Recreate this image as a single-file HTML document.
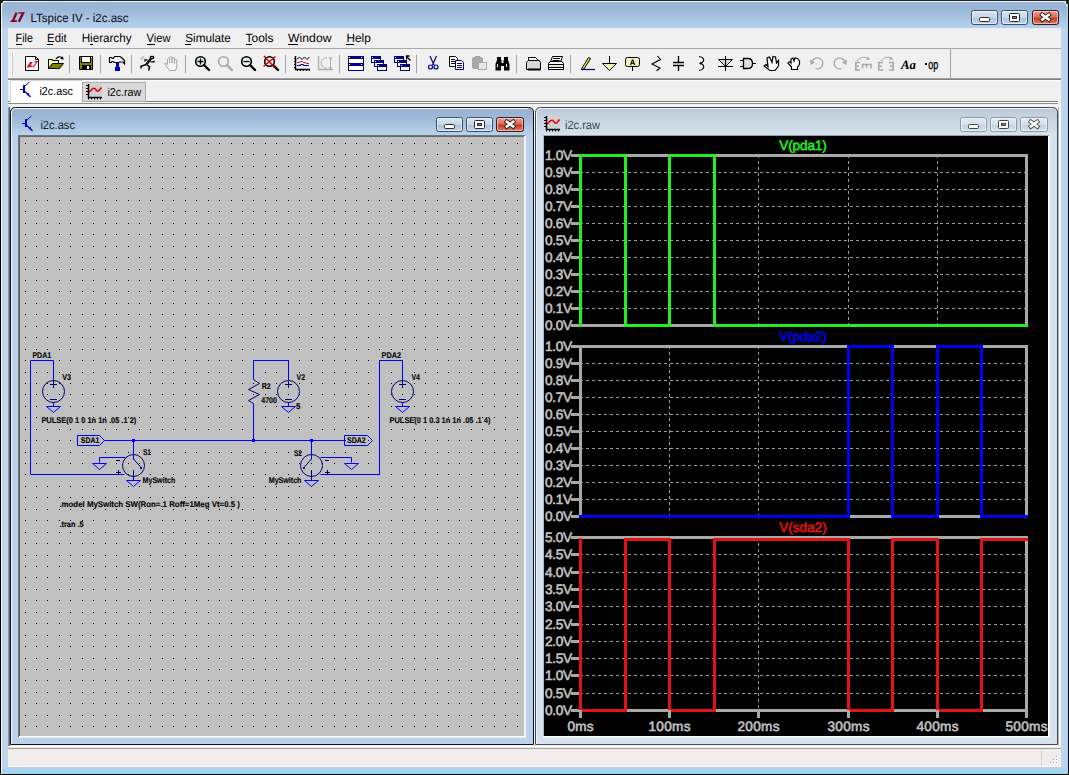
<!DOCTYPE html>
<html><head><meta charset="utf-8"><style>
html,body{margin:0;padding:0;width:1069px;height:775px;overflow:hidden;background:#000;}
svg{display:block;}
</style></head><body>
<svg width="1069" height="775" viewBox="0 0 1069 775" shape-rendering="auto" text-rendering="geometricPrecision">
<defs>
<linearGradient id="gTitle" x1="0" y1="0" x2="0" y2="1"><stop offset="0" stop-color="#99b2d1"/><stop offset="0.35" stop-color="#9bb7d8"/><stop offset="1" stop-color="#b6d2ea"/></linearGradient>
<linearGradient id="gChildA" x1="0" y1="0" x2="0" y2="1"><stop offset="0" stop-color="#97afcc"/><stop offset="0.3" stop-color="#9bb6d6"/><stop offset="1" stop-color="#b9d3ea"/></linearGradient>
<linearGradient id="gChildI" x1="0" y1="0" x2="0" y2="1"><stop offset="0" stop-color="#bccad8"/><stop offset="1" stop-color="#d6e2ee"/></linearGradient>
<linearGradient id="gBtn" x1="0" y1="0" x2="0" y2="1"><stop offset="0" stop-color="#dce8f4"/><stop offset="0.5" stop-color="#c4d6ea"/><stop offset="0.52" stop-color="#a9c0da"/><stop offset="1" stop-color="#c4d8ee"/></linearGradient>
<linearGradient id="gBtnI" x1="0" y1="0" x2="0" y2="1"><stop offset="0" stop-color="#e4ecf4"/><stop offset="0.5" stop-color="#d4dfea"/><stop offset="0.52" stop-color="#c2d0de"/><stop offset="1" stop-color="#d8e4f0"/></linearGradient>
<linearGradient id="gClose" x1="0" y1="0" x2="0" y2="1"><stop offset="0" stop-color="#eca294"/><stop offset="0.45" stop-color="#dc6e5e"/><stop offset="0.55" stop-color="#c83a22"/><stop offset="1" stop-color="#e2826e"/></linearGradient>
<linearGradient id="gBotFrame" x1="0" y1="0" x2="0" y2="1"><stop offset="0" stop-color="#bcd0ea"/><stop offset="1" stop-color="#90d8f8"/></linearGradient>
</defs>
<rect x="0" y="0" width="1069" height="775" fill="#c0d4ec" />
<rect x="0" y="0" width="1069" height="28" fill="url(#gTitle)" />
<rect x="0" y="0" width="1069" height="1" fill="#1c222a" />
<rect x="1" y="1" width="1067" height="1" fill="#eef3f8" />
<rect x="0" y="0" width="1" height="775" fill="#000" />
<rect x="1" y="1" width="1" height="773" fill="#f4f8fc" />
<rect x="1068" y="0" width="1" height="775" fill="#000" />
<rect x="1067" y="1" width="1" height="773" fill="#90d8f8" />
<rect x="0" y="774" width="1069" height="1" fill="#000" />
<rect x="2" y="767" width="1065" height="7" fill="url(#gBotFrame)" />
<rect x="0" y="0" width="3" height="3" fill="#1a0c08" />
<rect x="1066" y="0" width="3" height="4" fill="#0a2a0a" />
<path d="M1.5 6 Q1.5 1.5 6 1.5" stroke="#f4f8fc" fill="none"/>
<path d="M1062 1.5 Q1066.5 1.5 1066.5 6" stroke="#e8f4f0" fill="none"/>
<path d="M16.6 12.6 L12.8 21" stroke="#860018" stroke-width="2.3" fill="none"/>
<path d="M9.8 22 L11.5 20.3 L17.3 20.3 L16.6 22 Z" fill="#860018"/>
<path d="M18.3 12.2 H25 L24.4 13.6 H18 Z" fill="#860018"/>
<path d="M23.2 13 L18.8 21.8" stroke="#860018" stroke-width="2.3" fill="none"/>
<text x="30.5" y="21.6" font-family='"Liberation Sans", sans-serif' font-size="12" fill="#0a0a1a" font-weight="normal" font-style="normal" text-anchor="start" textLength="98" lengthAdjust="spacingAndGlyphs" >LTspice IV - i2c.asc</text>
<rect x="971.5" y="10.5" width="26" height="14" rx="2" fill="url(#gBtn)" stroke="#3c5070" stroke-width="1"/>
<rect x="972.5" y="11.5" width="24" height="12" rx="2" fill="none" stroke="rgba(255,255,255,0.5)" stroke-width="1"/>
<rect x="979.5" y="17.5" width="10" height="4" rx="1" fill="#fff" stroke="#2a2a2a" stroke-width="1"/>
<rect x="1001.5" y="10.5" width="26" height="14" rx="2" fill="url(#gBtn)" stroke="#3c5070" stroke-width="1"/>
<rect x="1002.5" y="11.5" width="24" height="12" rx="2" fill="none" stroke="rgba(255,255,255,0.5)" stroke-width="1"/>
<rect x="1009.5" y="13.5" width="10" height="8" rx="1" fill="#fff" stroke="#2a2a2a" stroke-width="1"/>
<rect x="1012.5" y="16.5" width="4" height="2" fill="#888" stroke="#2a2a2a" stroke-width="1"/>
<rect x="1032.5" y="10.5" width="26" height="14" rx="2" fill="url(#gClose)" stroke="#3a1a1a" stroke-width="1"/>
<rect x="1033.5" y="11.5" width="24" height="12" rx="2" fill="none" stroke="rgba(255,255,255,0.5)" stroke-width="1"/>
<path d="M1042.3 14.799999999999999 L1048.7 19.599999999999998 M1048.7 14.799999999999999 L1042.3 19.599999999999998" stroke="#2a2a2a" stroke-width="4.4" stroke-linecap="square"/>
<path d="M1042.3 14.799999999999999 L1048.7 19.599999999999998 M1048.7 14.799999999999999 L1042.3 19.599999999999998" stroke="#fff" stroke-width="2.5" stroke-linecap="square"/>
<rect x="8" y="28" width="1053" height="21" fill="#f0f0f0" />
<rect x="8" y="28" width="1053" height="1" fill="#e6eef8" />
<rect x="8" y="48" width="1053" height="1" fill="#a8a8a8" />
<rect x="8" y="49" width="1053" height="1" fill="#fcfcfc" />
<text x="15.6" y="42.3" font-family='"Liberation Sans", sans-serif' font-size="12" fill="#000" font-weight="normal" font-style="normal" text-anchor="start" textLength="17.3" lengthAdjust="spacingAndGlyphs" >File</text>
<rect x="16" y="44" width="6" height="1" fill="#000"/>
<text x="47.1" y="42.3" font-family='"Liberation Sans", sans-serif' font-size="12" fill="#000" font-weight="normal" font-style="normal" text-anchor="start" textLength="19.5" lengthAdjust="spacingAndGlyphs" >Edit</text>
<rect x="47" y="44" width="6" height="1" fill="#000"/>
<text x="81.7" y="42.3" font-family='"Liberation Sans", sans-serif' font-size="12" fill="#000" font-weight="normal" font-style="normal" text-anchor="start" textLength="49.8" lengthAdjust="spacingAndGlyphs" >Hierarchy</text>
<rect x="90" y="44" width="3" height="1" fill="#000"/>
<text x="146.6" y="42.3" font-family='"Liberation Sans", sans-serif' font-size="12" fill="#000" font-weight="normal" font-style="normal" text-anchor="start" textLength="24" lengthAdjust="spacingAndGlyphs" >View</text>
<rect x="147" y="44" width="8" height="1" fill="#000"/>
<text x="185.2" y="42.3" font-family='"Liberation Sans", sans-serif' font-size="12" fill="#000" font-weight="normal" font-style="normal" text-anchor="start" textLength="45.7" lengthAdjust="spacingAndGlyphs" >Simulate</text>
<rect x="185" y="44" width="6" height="1" fill="#000"/>
<text x="245.5" y="42.3" font-family='"Liberation Sans", sans-serif' font-size="12" fill="#000" font-weight="normal" font-style="normal" text-anchor="start" textLength="28" lengthAdjust="spacingAndGlyphs" >Tools</text>
<rect x="246" y="44" width="6" height="1" fill="#000"/>
<text x="288.1" y="42.3" font-family='"Liberation Sans", sans-serif' font-size="12" fill="#000" font-weight="normal" font-style="normal" text-anchor="start" textLength="43.4" lengthAdjust="spacingAndGlyphs" >Window</text>
<rect x="288" y="44" width="10" height="1" fill="#000"/>
<text x="346.5" y="42.3" font-family='"Liberation Sans", sans-serif' font-size="12" fill="#000" font-weight="normal" font-style="normal" text-anchor="start" textLength="24.3" lengthAdjust="spacingAndGlyphs" >Help</text>
<rect x="346" y="44" width="8" height="1" fill="#000"/>
<rect x="8" y="49" width="1053" height="30" fill="#f0f0f0" />
<rect x="8" y="78" width="1053" height="1" fill="#a4a4a4" />
<rect x="8" y="79" width="1053" height="1" fill="#7e7e7e" />
<rect x="8" y="80" width="1053" height="1" fill="#fafafa" />
<rect x="11" y="53" width="1" height="22" fill="#ffffff" />
<rect x="12" y="53" width="1" height="22" fill="#c8c8c8" />
<rect x="950" y="49" width="1" height="29" fill="#a0a0a0" />
<rect x="69" y="55" width="1" height="18" fill="#a0a0a0" />
<rect x="100" y="55" width="1" height="18" fill="#a0a0a0" />
<rect x="131" y="55" width="1" height="18" fill="#a0a0a0" />
<rect x="185" y="55" width="1" height="18" fill="#a0a0a0" />
<rect x="285" y="55" width="1" height="18" fill="#a0a0a0" />
<rect x="339" y="55" width="1" height="18" fill="#a0a0a0" />
<rect x="416" y="55" width="1" height="18" fill="#a0a0a0" />
<rect x="516" y="55" width="1" height="18" fill="#a0a0a0" />
<rect x="570" y="55" width="1" height="18" fill="#a0a0a0" />
<rect x="8" y="81" width="1053" height="26" fill="#f0f0f0" />
<rect x="8" y="101" width="1050" height="1" fill="#7c7c7c" />
<rect x="8" y="102" width="1050" height="1" fill="#ffffff" />
<rect x="8" y="103" width="1050" height="1" fill="#8c8c8c" />
<rect x="8" y="104" width="1050" height="3" fill="#fafafa" />
<rect x="10" y="80" width="72" height="23" fill="#ffffff" />
<rect x="10" y="80" width="1" height="23" fill="#d8d8d8" />
<rect x="10" y="80" width="72" height="1" fill="#d8d8d8" />
<rect x="82" y="82" width="64" height="20" fill="#dadada" />
<rect x="82.5" y="82.5" width="63" height="19" fill="none" stroke="#a8a8a8"/>
<text x="39.4" y="95" font-family='"Liberation Sans", sans-serif' font-size="11.5" fill="#000" font-weight="normal" font-style="normal" text-anchor="start" textLength="33.6" lengthAdjust="spacingAndGlyphs" >i2c.asc</text>
<text x="107.4" y="96.3" font-family='"Liberation Sans", sans-serif' font-size="11.5" fill="#000" font-weight="normal" font-style="normal" text-anchor="start" textLength="33.7" lengthAdjust="spacingAndGlyphs" >i2c.raw</text>
<rect x="8" y="104" width="1053" height="642" fill="#f2f2f2" />
<rect x="8" y="107" width="1" height="639" fill="#8a96a4" />
<rect x="9" y="107" width="1" height="639" fill="#5a626c" />
<rect x="1058" y="107" width="1" height="639" fill="#b0b0b0" />
<rect x="1059" y="107" width="1" height="639" fill="#f4fafa" />
<rect x="1060" y="104" width="1" height="642" fill="#f4fafa" />
<rect x="8" y="746" width="1053" height="21" fill="#efecea" />
<rect x="8" y="746" width="1053" height="1" fill="#ffffff" />
<rect x="8" y="748" width="1053" height="1" fill="#a0a0a0" />
<rect x="8" y="766" width="1053" height="1" fill="#ffffff" />
<rect x="1041" y="750" width="1" height="16" fill="#d0d0d0" />
<rect x="1056" y="756" width="2" height="2" fill="#ffffff" />
<rect x="1056" y="756" width="1" height="1" fill="#a0a0a8" />
<rect x="1053" y="759" width="2" height="2" fill="#ffffff" />
<rect x="1053" y="759" width="1" height="1" fill="#a0a0a8" />
<rect x="1056" y="759" width="2" height="2" fill="#ffffff" />
<rect x="1056" y="759" width="1" height="1" fill="#a0a0a8" />
<rect x="1050" y="762" width="2" height="2" fill="#ffffff" />
<rect x="1050" y="762" width="1" height="1" fill="#a0a0a8" />
<rect x="1053" y="762" width="2" height="2" fill="#ffffff" />
<rect x="1053" y="762" width="1" height="1" fill="#a0a0a8" />
<rect x="1056" y="762" width="2" height="2" fill="#ffffff" />
<rect x="1056" y="762" width="1" height="1" fill="#a0a0a8" />
<path d="M10.5 744.5 V112.5 Q10.5 107.5 15.5 107.5 H528.5 Q533.5 107.5 533.5 112.5 V744.5 Z" fill="#bcd2ec"/>
<clipPath id="cp10"><path d="M10.5 744.5 V112.5 Q10.5 107.5 15.5 107.5 H528.5 Q533.5 107.5 533.5 112.5 V744.5 Z"/></clipPath>
<rect x="10" y="107" width="524" height="29" fill="url(#gChildA)" clip-path="url(#cp10)"/>
<path d="M11.5 744 V113 Q11.5 108.5 16 108.5 H528 " fill="none" stroke="#f0f6fc" stroke-width="1"/>
<path d="M10.5 744.5 V112.5 Q10.5 107.5 15.5 107.5 H528.5 Q533.5 107.5 533.5 112.5 V744.5 Z" fill="none" stroke="#101418" stroke-width="1"/>
<path d="M535.5 744.5 V112.5 Q535.5 107.5 540.5 107.5 H1052.5 Q1057.5 107.5 1057.5 112.5 V744.5 Z" fill="#d6e2ee"/>
<clipPath id="cp535"><path d="M535.5 744.5 V112.5 Q535.5 107.5 540.5 107.5 H1052.5 Q1057.5 107.5 1057.5 112.5 V744.5 Z"/></clipPath>
<rect x="535" y="107" width="523" height="29" fill="url(#gChildI)" clip-path="url(#cp535)"/>
<path d="M536.5 744 V113 Q536.5 108.5 541 108.5 H1052 " fill="none" stroke="#f0f6fc" stroke-width="1"/>
<path d="M535.5 744.5 V112.5 Q535.5 107.5 540.5 107.5 H1052.5 Q1057.5 107.5 1057.5 112.5 V744.5 Z" fill="none" stroke="#484c52" stroke-width="1"/>
<rect x="19" y="135" width="506" height="602" fill="#c0c0c0" />
<rect x="18" y="135" width="507" height="1" fill="#6c747c" />
<rect x="18" y="135" width="1" height="602" fill="#707070" />
<rect x="19" y="136" width="1" height="601" fill="#646464" />
<rect x="19" y="136" width="506" height="1" fill="#646464" />
<rect x="524" y="136" width="1" height="601" fill="#fdfdfd" />
<rect x="19" y="736" width="507" height="1" fill="#fdfdfd" />
<rect x="525" y="136" width="1" height="602" fill="#e8eef6" />
<rect x="19" y="737" width="507" height="1" fill="#e8eef6" />
<rect x="543" y="135" width="506" height="601" fill="#000000" />
<rect x="543" y="135" width="506" height="1" fill="#9aa0a8" />
<rect x="543" y="135" width="1" height="601" fill="#b4bac2" />
<rect x="1048" y="136" width="1" height="601" fill="#fcfcfc" />
<rect x="1049" y="136" width="1" height="602" fill="#f0f4fa" />
<rect x="543" y="736" width="507" height="1" fill="#fcfcfc" />
<rect x="543" y="737" width="507" height="1" fill="#f0f4fa" />
<text x="40.4" y="129" font-family='"Liberation Sans", sans-serif' font-size="12" fill="#101828" font-weight="normal" font-style="normal" text-anchor="start" textLength="34.6" lengthAdjust="spacingAndGlyphs" >i2c.asc</text>
<text x="565" y="129" font-family='"Liberation Sans", sans-serif' font-size="12" fill="#3c4450" font-weight="normal" font-style="normal" text-anchor="start" textLength="35" lengthAdjust="spacingAndGlyphs" >i2c.raw</text>
<rect x="436.5" y="117.5" width="26" height="14" rx="2" fill="url(#gBtn)" stroke="#3c5070" stroke-width="1"/>
<rect x="437.5" y="118.5" width="24" height="12" rx="2" fill="none" stroke="rgba(255,255,255,0.5)" stroke-width="1"/>
<rect x="444.5" y="124.5" width="10" height="4" rx="1" fill="#fff" stroke="#2a2a2a" stroke-width="1"/>
<rect x="466.5" y="117.5" width="26" height="14" rx="2" fill="url(#gBtn)" stroke="#3c5070" stroke-width="1"/>
<rect x="467.5" y="118.5" width="24" height="12" rx="2" fill="none" stroke="rgba(255,255,255,0.5)" stroke-width="1"/>
<rect x="474.5" y="120.5" width="10" height="8" rx="1" fill="#fff" stroke="#2a2a2a" stroke-width="1"/>
<rect x="477.5" y="123.5" width="4" height="2" fill="#888" stroke="#2a2a2a" stroke-width="1"/>
<rect x="496.5" y="117.5" width="27" height="14" rx="2" fill="url(#gClose)" stroke="#3a1a1a" stroke-width="1"/>
<rect x="497.5" y="118.5" width="25" height="12" rx="2" fill="none" stroke="rgba(255,255,255,0.5)" stroke-width="1"/>
<path d="M506.8 121.8 L513.2 126.60000000000001 M513.2 121.8 L506.8 126.60000000000001" stroke="#2a2a2a" stroke-width="4.4" stroke-linecap="square"/>
<path d="M506.8 121.8 L513.2 126.60000000000001 M513.2 121.8 L506.8 126.60000000000001" stroke="#fff" stroke-width="2.5" stroke-linecap="square"/>
<rect x="960.5" y="117.5" width="26" height="14" rx="2" fill="url(#gBtnI)" stroke="#8a98aa" stroke-width="1"/>
<rect x="961.5" y="118.5" width="24" height="12" rx="2" fill="none" stroke="rgba(255,255,255,0.5)" stroke-width="1"/>
<rect x="968.5" y="124.5" width="10" height="4" rx="1" fill="#fff" stroke="#444" stroke-width="1"/>
<rect x="990.5" y="117.5" width="26" height="14" rx="2" fill="url(#gBtnI)" stroke="#8a98aa" stroke-width="1"/>
<rect x="991.5" y="118.5" width="24" height="12" rx="2" fill="none" stroke="rgba(255,255,255,0.5)" stroke-width="1"/>
<rect x="998.5" y="120.5" width="10" height="8" rx="1" fill="#fff" stroke="#444" stroke-width="1"/>
<rect x="1001.5" y="123.5" width="4" height="2" fill="#888" stroke="#444" stroke-width="1"/>
<rect x="1020.5" y="117.5" width="27" height="14" rx="2" fill="url(#gBtnI)" stroke="#8a98aa" stroke-width="1"/>
<rect x="1021.5" y="118.5" width="25" height="12" rx="2" fill="none" stroke="rgba(255,255,255,0.5)" stroke-width="1"/>
<path d="M1030.8 121.8 L1037.2 126.60000000000001 M1037.2 121.8 L1030.8 126.60000000000001" stroke="#555" stroke-width="4.4" stroke-linecap="square"/>
<path d="M1030.8 121.8 L1037.2 126.60000000000001 M1037.2 121.8 L1030.8 126.60000000000001" stroke="#fff" stroke-width="2.5" stroke-linecap="square"/>
<path d="M25 143h1v1h-1zM36 143h1v1h-1zM47 143h1v1h-1zM59 143h1v1h-1zM70 143h1v1h-1zM82 143h1v1h-1zM93 143h1v1h-1zM105 143h1v1h-1zM116 143h1v1h-1zM128 143h1v1h-1zM139 143h1v1h-1zM150 143h1v1h-1zM162 143h1v1h-1zM173 143h1v1h-1zM185 143h1v1h-1zM196 143h1v1h-1zM208 143h1v1h-1zM219 143h1v1h-1zM231 143h1v1h-1zM242 143h1v1h-1zM253 143h1v1h-1zM265 143h1v1h-1zM276 143h1v1h-1zM288 143h1v1h-1zM299 143h1v1h-1zM311 143h1v1h-1zM322 143h1v1h-1zM334 143h1v1h-1zM345 143h1v1h-1zM356 143h1v1h-1zM368 143h1v1h-1zM379 143h1v1h-1zM391 143h1v1h-1zM402 143h1v1h-1zM414 143h1v1h-1zM425 143h1v1h-1zM437 143h1v1h-1zM448 143h1v1h-1zM459 143h1v1h-1zM471 143h1v1h-1zM482 143h1v1h-1zM494 143h1v1h-1zM505 143h1v1h-1zM517 143h1v1h-1zM25 154h1v1h-1zM36 154h1v1h-1zM47 154h1v1h-1zM59 154h1v1h-1zM70 154h1v1h-1zM82 154h1v1h-1zM93 154h1v1h-1zM105 154h1v1h-1zM116 154h1v1h-1zM128 154h1v1h-1zM139 154h1v1h-1zM150 154h1v1h-1zM162 154h1v1h-1zM173 154h1v1h-1zM185 154h1v1h-1zM196 154h1v1h-1zM208 154h1v1h-1zM219 154h1v1h-1zM231 154h1v1h-1zM242 154h1v1h-1zM253 154h1v1h-1zM265 154h1v1h-1zM276 154h1v1h-1zM288 154h1v1h-1zM299 154h1v1h-1zM311 154h1v1h-1zM322 154h1v1h-1zM334 154h1v1h-1zM345 154h1v1h-1zM356 154h1v1h-1zM368 154h1v1h-1zM379 154h1v1h-1zM391 154h1v1h-1zM402 154h1v1h-1zM414 154h1v1h-1zM425 154h1v1h-1zM437 154h1v1h-1zM448 154h1v1h-1zM459 154h1v1h-1zM471 154h1v1h-1zM482 154h1v1h-1zM494 154h1v1h-1zM505 154h1v1h-1zM517 154h1v1h-1zM25 166h1v1h-1zM36 166h1v1h-1zM47 166h1v1h-1zM59 166h1v1h-1zM70 166h1v1h-1zM82 166h1v1h-1zM93 166h1v1h-1zM105 166h1v1h-1zM116 166h1v1h-1zM128 166h1v1h-1zM139 166h1v1h-1zM150 166h1v1h-1zM162 166h1v1h-1zM173 166h1v1h-1zM185 166h1v1h-1zM196 166h1v1h-1zM208 166h1v1h-1zM219 166h1v1h-1zM231 166h1v1h-1zM242 166h1v1h-1zM253 166h1v1h-1zM265 166h1v1h-1zM276 166h1v1h-1zM288 166h1v1h-1zM299 166h1v1h-1zM311 166h1v1h-1zM322 166h1v1h-1zM334 166h1v1h-1zM345 166h1v1h-1zM356 166h1v1h-1zM368 166h1v1h-1zM379 166h1v1h-1zM391 166h1v1h-1zM402 166h1v1h-1zM414 166h1v1h-1zM425 166h1v1h-1zM437 166h1v1h-1zM448 166h1v1h-1zM459 166h1v1h-1zM471 166h1v1h-1zM482 166h1v1h-1zM494 166h1v1h-1zM505 166h1v1h-1zM517 166h1v1h-1zM25 177h1v1h-1zM36 177h1v1h-1zM47 177h1v1h-1zM59 177h1v1h-1zM70 177h1v1h-1zM82 177h1v1h-1zM93 177h1v1h-1zM105 177h1v1h-1zM116 177h1v1h-1zM128 177h1v1h-1zM139 177h1v1h-1zM150 177h1v1h-1zM162 177h1v1h-1zM173 177h1v1h-1zM185 177h1v1h-1zM196 177h1v1h-1zM208 177h1v1h-1zM219 177h1v1h-1zM231 177h1v1h-1zM242 177h1v1h-1zM253 177h1v1h-1zM265 177h1v1h-1zM276 177h1v1h-1zM288 177h1v1h-1zM299 177h1v1h-1zM311 177h1v1h-1zM322 177h1v1h-1zM334 177h1v1h-1zM345 177h1v1h-1zM356 177h1v1h-1zM368 177h1v1h-1zM379 177h1v1h-1zM391 177h1v1h-1zM402 177h1v1h-1zM414 177h1v1h-1zM425 177h1v1h-1zM437 177h1v1h-1zM448 177h1v1h-1zM459 177h1v1h-1zM471 177h1v1h-1zM482 177h1v1h-1zM494 177h1v1h-1zM505 177h1v1h-1zM517 177h1v1h-1zM25 188h1v1h-1zM36 188h1v1h-1zM47 188h1v1h-1zM59 188h1v1h-1zM70 188h1v1h-1zM82 188h1v1h-1zM93 188h1v1h-1zM105 188h1v1h-1zM116 188h1v1h-1zM128 188h1v1h-1zM139 188h1v1h-1zM150 188h1v1h-1zM162 188h1v1h-1zM173 188h1v1h-1zM185 188h1v1h-1zM196 188h1v1h-1zM208 188h1v1h-1zM219 188h1v1h-1zM231 188h1v1h-1zM242 188h1v1h-1zM253 188h1v1h-1zM265 188h1v1h-1zM276 188h1v1h-1zM288 188h1v1h-1zM299 188h1v1h-1zM311 188h1v1h-1zM322 188h1v1h-1zM334 188h1v1h-1zM345 188h1v1h-1zM356 188h1v1h-1zM368 188h1v1h-1zM379 188h1v1h-1zM391 188h1v1h-1zM402 188h1v1h-1zM414 188h1v1h-1zM425 188h1v1h-1zM437 188h1v1h-1zM448 188h1v1h-1zM459 188h1v1h-1zM471 188h1v1h-1zM482 188h1v1h-1zM494 188h1v1h-1zM505 188h1v1h-1zM517 188h1v1h-1zM25 200h1v1h-1zM36 200h1v1h-1zM47 200h1v1h-1zM59 200h1v1h-1zM70 200h1v1h-1zM82 200h1v1h-1zM93 200h1v1h-1zM105 200h1v1h-1zM116 200h1v1h-1zM128 200h1v1h-1zM139 200h1v1h-1zM150 200h1v1h-1zM162 200h1v1h-1zM173 200h1v1h-1zM185 200h1v1h-1zM196 200h1v1h-1zM208 200h1v1h-1zM219 200h1v1h-1zM231 200h1v1h-1zM242 200h1v1h-1zM253 200h1v1h-1zM265 200h1v1h-1zM276 200h1v1h-1zM288 200h1v1h-1zM299 200h1v1h-1zM311 200h1v1h-1zM322 200h1v1h-1zM334 200h1v1h-1zM345 200h1v1h-1zM356 200h1v1h-1zM368 200h1v1h-1zM379 200h1v1h-1zM391 200h1v1h-1zM402 200h1v1h-1zM414 200h1v1h-1zM425 200h1v1h-1zM437 200h1v1h-1zM448 200h1v1h-1zM459 200h1v1h-1zM471 200h1v1h-1zM482 200h1v1h-1zM494 200h1v1h-1zM505 200h1v1h-1zM517 200h1v1h-1zM25 211h1v1h-1zM36 211h1v1h-1zM47 211h1v1h-1zM59 211h1v1h-1zM70 211h1v1h-1zM82 211h1v1h-1zM93 211h1v1h-1zM105 211h1v1h-1zM116 211h1v1h-1zM128 211h1v1h-1zM139 211h1v1h-1zM150 211h1v1h-1zM162 211h1v1h-1zM173 211h1v1h-1zM185 211h1v1h-1zM196 211h1v1h-1zM208 211h1v1h-1zM219 211h1v1h-1zM231 211h1v1h-1zM242 211h1v1h-1zM253 211h1v1h-1zM265 211h1v1h-1zM276 211h1v1h-1zM288 211h1v1h-1zM299 211h1v1h-1zM311 211h1v1h-1zM322 211h1v1h-1zM334 211h1v1h-1zM345 211h1v1h-1zM356 211h1v1h-1zM368 211h1v1h-1zM379 211h1v1h-1zM391 211h1v1h-1zM402 211h1v1h-1zM414 211h1v1h-1zM425 211h1v1h-1zM437 211h1v1h-1zM448 211h1v1h-1zM459 211h1v1h-1zM471 211h1v1h-1zM482 211h1v1h-1zM494 211h1v1h-1zM505 211h1v1h-1zM517 211h1v1h-1zM25 223h1v1h-1zM36 223h1v1h-1zM47 223h1v1h-1zM59 223h1v1h-1zM70 223h1v1h-1zM82 223h1v1h-1zM93 223h1v1h-1zM105 223h1v1h-1zM116 223h1v1h-1zM128 223h1v1h-1zM139 223h1v1h-1zM150 223h1v1h-1zM162 223h1v1h-1zM173 223h1v1h-1zM185 223h1v1h-1zM196 223h1v1h-1zM208 223h1v1h-1zM219 223h1v1h-1zM231 223h1v1h-1zM242 223h1v1h-1zM253 223h1v1h-1zM265 223h1v1h-1zM276 223h1v1h-1zM288 223h1v1h-1zM299 223h1v1h-1zM311 223h1v1h-1zM322 223h1v1h-1zM334 223h1v1h-1zM345 223h1v1h-1zM356 223h1v1h-1zM368 223h1v1h-1zM379 223h1v1h-1zM391 223h1v1h-1zM402 223h1v1h-1zM414 223h1v1h-1zM425 223h1v1h-1zM437 223h1v1h-1zM448 223h1v1h-1zM459 223h1v1h-1zM471 223h1v1h-1zM482 223h1v1h-1zM494 223h1v1h-1zM505 223h1v1h-1zM517 223h1v1h-1zM25 234h1v1h-1zM36 234h1v1h-1zM47 234h1v1h-1zM59 234h1v1h-1zM70 234h1v1h-1zM82 234h1v1h-1zM93 234h1v1h-1zM105 234h1v1h-1zM116 234h1v1h-1zM128 234h1v1h-1zM139 234h1v1h-1zM150 234h1v1h-1zM162 234h1v1h-1zM173 234h1v1h-1zM185 234h1v1h-1zM196 234h1v1h-1zM208 234h1v1h-1zM219 234h1v1h-1zM231 234h1v1h-1zM242 234h1v1h-1zM253 234h1v1h-1zM265 234h1v1h-1zM276 234h1v1h-1zM288 234h1v1h-1zM299 234h1v1h-1zM311 234h1v1h-1zM322 234h1v1h-1zM334 234h1v1h-1zM345 234h1v1h-1zM356 234h1v1h-1zM368 234h1v1h-1zM379 234h1v1h-1zM391 234h1v1h-1zM402 234h1v1h-1zM414 234h1v1h-1zM425 234h1v1h-1zM437 234h1v1h-1zM448 234h1v1h-1zM459 234h1v1h-1zM471 234h1v1h-1zM482 234h1v1h-1zM494 234h1v1h-1zM505 234h1v1h-1zM517 234h1v1h-1zM25 246h1v1h-1zM36 246h1v1h-1zM47 246h1v1h-1zM59 246h1v1h-1zM70 246h1v1h-1zM82 246h1v1h-1zM93 246h1v1h-1zM105 246h1v1h-1zM116 246h1v1h-1zM128 246h1v1h-1zM139 246h1v1h-1zM150 246h1v1h-1zM162 246h1v1h-1zM173 246h1v1h-1zM185 246h1v1h-1zM196 246h1v1h-1zM208 246h1v1h-1zM219 246h1v1h-1zM231 246h1v1h-1zM242 246h1v1h-1zM253 246h1v1h-1zM265 246h1v1h-1zM276 246h1v1h-1zM288 246h1v1h-1zM299 246h1v1h-1zM311 246h1v1h-1zM322 246h1v1h-1zM334 246h1v1h-1zM345 246h1v1h-1zM356 246h1v1h-1zM368 246h1v1h-1zM379 246h1v1h-1zM391 246h1v1h-1zM402 246h1v1h-1zM414 246h1v1h-1zM425 246h1v1h-1zM437 246h1v1h-1zM448 246h1v1h-1zM459 246h1v1h-1zM471 246h1v1h-1zM482 246h1v1h-1zM494 246h1v1h-1zM505 246h1v1h-1zM517 246h1v1h-1zM25 257h1v1h-1zM36 257h1v1h-1zM47 257h1v1h-1zM59 257h1v1h-1zM70 257h1v1h-1zM82 257h1v1h-1zM93 257h1v1h-1zM105 257h1v1h-1zM116 257h1v1h-1zM128 257h1v1h-1zM139 257h1v1h-1zM150 257h1v1h-1zM162 257h1v1h-1zM173 257h1v1h-1zM185 257h1v1h-1zM196 257h1v1h-1zM208 257h1v1h-1zM219 257h1v1h-1zM231 257h1v1h-1zM242 257h1v1h-1zM253 257h1v1h-1zM265 257h1v1h-1zM276 257h1v1h-1zM288 257h1v1h-1zM299 257h1v1h-1zM311 257h1v1h-1zM322 257h1v1h-1zM334 257h1v1h-1zM345 257h1v1h-1zM356 257h1v1h-1zM368 257h1v1h-1zM379 257h1v1h-1zM391 257h1v1h-1zM402 257h1v1h-1zM414 257h1v1h-1zM425 257h1v1h-1zM437 257h1v1h-1zM448 257h1v1h-1zM459 257h1v1h-1zM471 257h1v1h-1zM482 257h1v1h-1zM494 257h1v1h-1zM505 257h1v1h-1zM517 257h1v1h-1zM25 269h1v1h-1zM36 269h1v1h-1zM47 269h1v1h-1zM59 269h1v1h-1zM70 269h1v1h-1zM82 269h1v1h-1zM93 269h1v1h-1zM105 269h1v1h-1zM116 269h1v1h-1zM128 269h1v1h-1zM139 269h1v1h-1zM150 269h1v1h-1zM162 269h1v1h-1zM173 269h1v1h-1zM185 269h1v1h-1zM196 269h1v1h-1zM208 269h1v1h-1zM219 269h1v1h-1zM231 269h1v1h-1zM242 269h1v1h-1zM253 269h1v1h-1zM265 269h1v1h-1zM276 269h1v1h-1zM288 269h1v1h-1zM299 269h1v1h-1zM311 269h1v1h-1zM322 269h1v1h-1zM334 269h1v1h-1zM345 269h1v1h-1zM356 269h1v1h-1zM368 269h1v1h-1zM379 269h1v1h-1zM391 269h1v1h-1zM402 269h1v1h-1zM414 269h1v1h-1zM425 269h1v1h-1zM437 269h1v1h-1zM448 269h1v1h-1zM459 269h1v1h-1zM471 269h1v1h-1zM482 269h1v1h-1zM494 269h1v1h-1zM505 269h1v1h-1zM517 269h1v1h-1zM25 280h1v1h-1zM36 280h1v1h-1zM47 280h1v1h-1zM59 280h1v1h-1zM70 280h1v1h-1zM82 280h1v1h-1zM93 280h1v1h-1zM105 280h1v1h-1zM116 280h1v1h-1zM128 280h1v1h-1zM139 280h1v1h-1zM150 280h1v1h-1zM162 280h1v1h-1zM173 280h1v1h-1zM185 280h1v1h-1zM196 280h1v1h-1zM208 280h1v1h-1zM219 280h1v1h-1zM231 280h1v1h-1zM242 280h1v1h-1zM253 280h1v1h-1zM265 280h1v1h-1zM276 280h1v1h-1zM288 280h1v1h-1zM299 280h1v1h-1zM311 280h1v1h-1zM322 280h1v1h-1zM334 280h1v1h-1zM345 280h1v1h-1zM356 280h1v1h-1zM368 280h1v1h-1zM379 280h1v1h-1zM391 280h1v1h-1zM402 280h1v1h-1zM414 280h1v1h-1zM425 280h1v1h-1zM437 280h1v1h-1zM448 280h1v1h-1zM459 280h1v1h-1zM471 280h1v1h-1zM482 280h1v1h-1zM494 280h1v1h-1zM505 280h1v1h-1zM517 280h1v1h-1zM25 291h1v1h-1zM36 291h1v1h-1zM47 291h1v1h-1zM59 291h1v1h-1zM70 291h1v1h-1zM82 291h1v1h-1zM93 291h1v1h-1zM105 291h1v1h-1zM116 291h1v1h-1zM128 291h1v1h-1zM139 291h1v1h-1zM150 291h1v1h-1zM162 291h1v1h-1zM173 291h1v1h-1zM185 291h1v1h-1zM196 291h1v1h-1zM208 291h1v1h-1zM219 291h1v1h-1zM231 291h1v1h-1zM242 291h1v1h-1zM253 291h1v1h-1zM265 291h1v1h-1zM276 291h1v1h-1zM288 291h1v1h-1zM299 291h1v1h-1zM311 291h1v1h-1zM322 291h1v1h-1zM334 291h1v1h-1zM345 291h1v1h-1zM356 291h1v1h-1zM368 291h1v1h-1zM379 291h1v1h-1zM391 291h1v1h-1zM402 291h1v1h-1zM414 291h1v1h-1zM425 291h1v1h-1zM437 291h1v1h-1zM448 291h1v1h-1zM459 291h1v1h-1zM471 291h1v1h-1zM482 291h1v1h-1zM494 291h1v1h-1zM505 291h1v1h-1zM517 291h1v1h-1zM25 303h1v1h-1zM36 303h1v1h-1zM47 303h1v1h-1zM59 303h1v1h-1zM70 303h1v1h-1zM82 303h1v1h-1zM93 303h1v1h-1zM105 303h1v1h-1zM116 303h1v1h-1zM128 303h1v1h-1zM139 303h1v1h-1zM150 303h1v1h-1zM162 303h1v1h-1zM173 303h1v1h-1zM185 303h1v1h-1zM196 303h1v1h-1zM208 303h1v1h-1zM219 303h1v1h-1zM231 303h1v1h-1zM242 303h1v1h-1zM253 303h1v1h-1zM265 303h1v1h-1zM276 303h1v1h-1zM288 303h1v1h-1zM299 303h1v1h-1zM311 303h1v1h-1zM322 303h1v1h-1zM334 303h1v1h-1zM345 303h1v1h-1zM356 303h1v1h-1zM368 303h1v1h-1zM379 303h1v1h-1zM391 303h1v1h-1zM402 303h1v1h-1zM414 303h1v1h-1zM425 303h1v1h-1zM437 303h1v1h-1zM448 303h1v1h-1zM459 303h1v1h-1zM471 303h1v1h-1zM482 303h1v1h-1zM494 303h1v1h-1zM505 303h1v1h-1zM517 303h1v1h-1zM25 314h1v1h-1zM36 314h1v1h-1zM47 314h1v1h-1zM59 314h1v1h-1zM70 314h1v1h-1zM82 314h1v1h-1zM93 314h1v1h-1zM105 314h1v1h-1zM116 314h1v1h-1zM128 314h1v1h-1zM139 314h1v1h-1zM150 314h1v1h-1zM162 314h1v1h-1zM173 314h1v1h-1zM185 314h1v1h-1zM196 314h1v1h-1zM208 314h1v1h-1zM219 314h1v1h-1zM231 314h1v1h-1zM242 314h1v1h-1zM253 314h1v1h-1zM265 314h1v1h-1zM276 314h1v1h-1zM288 314h1v1h-1zM299 314h1v1h-1zM311 314h1v1h-1zM322 314h1v1h-1zM334 314h1v1h-1zM345 314h1v1h-1zM356 314h1v1h-1zM368 314h1v1h-1zM379 314h1v1h-1zM391 314h1v1h-1zM402 314h1v1h-1zM414 314h1v1h-1zM425 314h1v1h-1zM437 314h1v1h-1zM448 314h1v1h-1zM459 314h1v1h-1zM471 314h1v1h-1zM482 314h1v1h-1zM494 314h1v1h-1zM505 314h1v1h-1zM517 314h1v1h-1zM25 326h1v1h-1zM36 326h1v1h-1zM47 326h1v1h-1zM59 326h1v1h-1zM70 326h1v1h-1zM82 326h1v1h-1zM93 326h1v1h-1zM105 326h1v1h-1zM116 326h1v1h-1zM128 326h1v1h-1zM139 326h1v1h-1zM150 326h1v1h-1zM162 326h1v1h-1zM173 326h1v1h-1zM185 326h1v1h-1zM196 326h1v1h-1zM208 326h1v1h-1zM219 326h1v1h-1zM231 326h1v1h-1zM242 326h1v1h-1zM253 326h1v1h-1zM265 326h1v1h-1zM276 326h1v1h-1zM288 326h1v1h-1zM299 326h1v1h-1zM311 326h1v1h-1zM322 326h1v1h-1zM334 326h1v1h-1zM345 326h1v1h-1zM356 326h1v1h-1zM368 326h1v1h-1zM379 326h1v1h-1zM391 326h1v1h-1zM402 326h1v1h-1zM414 326h1v1h-1zM425 326h1v1h-1zM437 326h1v1h-1zM448 326h1v1h-1zM459 326h1v1h-1zM471 326h1v1h-1zM482 326h1v1h-1zM494 326h1v1h-1zM505 326h1v1h-1zM517 326h1v1h-1zM25 337h1v1h-1zM36 337h1v1h-1zM47 337h1v1h-1zM59 337h1v1h-1zM70 337h1v1h-1zM82 337h1v1h-1zM93 337h1v1h-1zM105 337h1v1h-1zM116 337h1v1h-1zM128 337h1v1h-1zM139 337h1v1h-1zM150 337h1v1h-1zM162 337h1v1h-1zM173 337h1v1h-1zM185 337h1v1h-1zM196 337h1v1h-1zM208 337h1v1h-1zM219 337h1v1h-1zM231 337h1v1h-1zM242 337h1v1h-1zM253 337h1v1h-1zM265 337h1v1h-1zM276 337h1v1h-1zM288 337h1v1h-1zM299 337h1v1h-1zM311 337h1v1h-1zM322 337h1v1h-1zM334 337h1v1h-1zM345 337h1v1h-1zM356 337h1v1h-1zM368 337h1v1h-1zM379 337h1v1h-1zM391 337h1v1h-1zM402 337h1v1h-1zM414 337h1v1h-1zM425 337h1v1h-1zM437 337h1v1h-1zM448 337h1v1h-1zM459 337h1v1h-1zM471 337h1v1h-1zM482 337h1v1h-1zM494 337h1v1h-1zM505 337h1v1h-1zM517 337h1v1h-1zM25 349h1v1h-1zM36 349h1v1h-1zM47 349h1v1h-1zM59 349h1v1h-1zM70 349h1v1h-1zM82 349h1v1h-1zM93 349h1v1h-1zM105 349h1v1h-1zM116 349h1v1h-1zM128 349h1v1h-1zM139 349h1v1h-1zM150 349h1v1h-1zM162 349h1v1h-1zM173 349h1v1h-1zM185 349h1v1h-1zM196 349h1v1h-1zM208 349h1v1h-1zM219 349h1v1h-1zM231 349h1v1h-1zM242 349h1v1h-1zM253 349h1v1h-1zM265 349h1v1h-1zM276 349h1v1h-1zM288 349h1v1h-1zM299 349h1v1h-1zM311 349h1v1h-1zM322 349h1v1h-1zM334 349h1v1h-1zM345 349h1v1h-1zM356 349h1v1h-1zM368 349h1v1h-1zM379 349h1v1h-1zM391 349h1v1h-1zM402 349h1v1h-1zM414 349h1v1h-1zM425 349h1v1h-1zM437 349h1v1h-1zM448 349h1v1h-1zM459 349h1v1h-1zM471 349h1v1h-1zM482 349h1v1h-1zM494 349h1v1h-1zM505 349h1v1h-1zM517 349h1v1h-1zM25 360h1v1h-1zM36 360h1v1h-1zM47 360h1v1h-1zM59 360h1v1h-1zM70 360h1v1h-1zM82 360h1v1h-1zM93 360h1v1h-1zM105 360h1v1h-1zM116 360h1v1h-1zM128 360h1v1h-1zM139 360h1v1h-1zM150 360h1v1h-1zM162 360h1v1h-1zM173 360h1v1h-1zM185 360h1v1h-1zM196 360h1v1h-1zM208 360h1v1h-1zM219 360h1v1h-1zM231 360h1v1h-1zM242 360h1v1h-1zM253 360h1v1h-1zM265 360h1v1h-1zM276 360h1v1h-1zM288 360h1v1h-1zM299 360h1v1h-1zM311 360h1v1h-1zM322 360h1v1h-1zM334 360h1v1h-1zM345 360h1v1h-1zM356 360h1v1h-1zM368 360h1v1h-1zM379 360h1v1h-1zM391 360h1v1h-1zM402 360h1v1h-1zM414 360h1v1h-1zM425 360h1v1h-1zM437 360h1v1h-1zM448 360h1v1h-1zM459 360h1v1h-1zM471 360h1v1h-1zM482 360h1v1h-1zM494 360h1v1h-1zM505 360h1v1h-1zM517 360h1v1h-1zM25 372h1v1h-1zM36 372h1v1h-1zM47 372h1v1h-1zM59 372h1v1h-1zM70 372h1v1h-1zM82 372h1v1h-1zM93 372h1v1h-1zM105 372h1v1h-1zM116 372h1v1h-1zM128 372h1v1h-1zM139 372h1v1h-1zM150 372h1v1h-1zM162 372h1v1h-1zM173 372h1v1h-1zM185 372h1v1h-1zM196 372h1v1h-1zM208 372h1v1h-1zM219 372h1v1h-1zM231 372h1v1h-1zM242 372h1v1h-1zM253 372h1v1h-1zM265 372h1v1h-1zM276 372h1v1h-1zM288 372h1v1h-1zM299 372h1v1h-1zM311 372h1v1h-1zM322 372h1v1h-1zM334 372h1v1h-1zM345 372h1v1h-1zM356 372h1v1h-1zM368 372h1v1h-1zM379 372h1v1h-1zM391 372h1v1h-1zM402 372h1v1h-1zM414 372h1v1h-1zM425 372h1v1h-1zM437 372h1v1h-1zM448 372h1v1h-1zM459 372h1v1h-1zM471 372h1v1h-1zM482 372h1v1h-1zM494 372h1v1h-1zM505 372h1v1h-1zM517 372h1v1h-1zM25 383h1v1h-1zM36 383h1v1h-1zM47 383h1v1h-1zM59 383h1v1h-1zM70 383h1v1h-1zM82 383h1v1h-1zM93 383h1v1h-1zM105 383h1v1h-1zM116 383h1v1h-1zM128 383h1v1h-1zM139 383h1v1h-1zM150 383h1v1h-1zM162 383h1v1h-1zM173 383h1v1h-1zM185 383h1v1h-1zM196 383h1v1h-1zM208 383h1v1h-1zM219 383h1v1h-1zM231 383h1v1h-1zM242 383h1v1h-1zM253 383h1v1h-1zM265 383h1v1h-1zM276 383h1v1h-1zM288 383h1v1h-1zM299 383h1v1h-1zM311 383h1v1h-1zM322 383h1v1h-1zM334 383h1v1h-1zM345 383h1v1h-1zM356 383h1v1h-1zM368 383h1v1h-1zM379 383h1v1h-1zM391 383h1v1h-1zM402 383h1v1h-1zM414 383h1v1h-1zM425 383h1v1h-1zM437 383h1v1h-1zM448 383h1v1h-1zM459 383h1v1h-1zM471 383h1v1h-1zM482 383h1v1h-1zM494 383h1v1h-1zM505 383h1v1h-1zM517 383h1v1h-1zM25 394h1v1h-1zM36 394h1v1h-1zM47 394h1v1h-1zM59 394h1v1h-1zM70 394h1v1h-1zM82 394h1v1h-1zM93 394h1v1h-1zM105 394h1v1h-1zM116 394h1v1h-1zM128 394h1v1h-1zM139 394h1v1h-1zM150 394h1v1h-1zM162 394h1v1h-1zM173 394h1v1h-1zM185 394h1v1h-1zM196 394h1v1h-1zM208 394h1v1h-1zM219 394h1v1h-1zM231 394h1v1h-1zM242 394h1v1h-1zM253 394h1v1h-1zM265 394h1v1h-1zM276 394h1v1h-1zM288 394h1v1h-1zM299 394h1v1h-1zM311 394h1v1h-1zM322 394h1v1h-1zM334 394h1v1h-1zM345 394h1v1h-1zM356 394h1v1h-1zM368 394h1v1h-1zM379 394h1v1h-1zM391 394h1v1h-1zM402 394h1v1h-1zM414 394h1v1h-1zM425 394h1v1h-1zM437 394h1v1h-1zM448 394h1v1h-1zM459 394h1v1h-1zM471 394h1v1h-1zM482 394h1v1h-1zM494 394h1v1h-1zM505 394h1v1h-1zM517 394h1v1h-1zM25 406h1v1h-1zM36 406h1v1h-1zM47 406h1v1h-1zM59 406h1v1h-1zM70 406h1v1h-1zM82 406h1v1h-1zM93 406h1v1h-1zM105 406h1v1h-1zM116 406h1v1h-1zM128 406h1v1h-1zM139 406h1v1h-1zM150 406h1v1h-1zM162 406h1v1h-1zM173 406h1v1h-1zM185 406h1v1h-1zM196 406h1v1h-1zM208 406h1v1h-1zM219 406h1v1h-1zM231 406h1v1h-1zM242 406h1v1h-1zM253 406h1v1h-1zM265 406h1v1h-1zM276 406h1v1h-1zM288 406h1v1h-1zM299 406h1v1h-1zM311 406h1v1h-1zM322 406h1v1h-1zM334 406h1v1h-1zM345 406h1v1h-1zM356 406h1v1h-1zM368 406h1v1h-1zM379 406h1v1h-1zM391 406h1v1h-1zM402 406h1v1h-1zM414 406h1v1h-1zM425 406h1v1h-1zM437 406h1v1h-1zM448 406h1v1h-1zM459 406h1v1h-1zM471 406h1v1h-1zM482 406h1v1h-1zM494 406h1v1h-1zM505 406h1v1h-1zM517 406h1v1h-1zM25 417h1v1h-1zM36 417h1v1h-1zM47 417h1v1h-1zM59 417h1v1h-1zM70 417h1v1h-1zM82 417h1v1h-1zM93 417h1v1h-1zM105 417h1v1h-1zM116 417h1v1h-1zM128 417h1v1h-1zM139 417h1v1h-1zM150 417h1v1h-1zM162 417h1v1h-1zM173 417h1v1h-1zM185 417h1v1h-1zM196 417h1v1h-1zM208 417h1v1h-1zM219 417h1v1h-1zM231 417h1v1h-1zM242 417h1v1h-1zM253 417h1v1h-1zM265 417h1v1h-1zM276 417h1v1h-1zM288 417h1v1h-1zM299 417h1v1h-1zM311 417h1v1h-1zM322 417h1v1h-1zM334 417h1v1h-1zM345 417h1v1h-1zM356 417h1v1h-1zM368 417h1v1h-1zM379 417h1v1h-1zM391 417h1v1h-1zM402 417h1v1h-1zM414 417h1v1h-1zM425 417h1v1h-1zM437 417h1v1h-1zM448 417h1v1h-1zM459 417h1v1h-1zM471 417h1v1h-1zM482 417h1v1h-1zM494 417h1v1h-1zM505 417h1v1h-1zM517 417h1v1h-1zM25 429h1v1h-1zM36 429h1v1h-1zM47 429h1v1h-1zM59 429h1v1h-1zM70 429h1v1h-1zM82 429h1v1h-1zM93 429h1v1h-1zM105 429h1v1h-1zM116 429h1v1h-1zM128 429h1v1h-1zM139 429h1v1h-1zM150 429h1v1h-1zM162 429h1v1h-1zM173 429h1v1h-1zM185 429h1v1h-1zM196 429h1v1h-1zM208 429h1v1h-1zM219 429h1v1h-1zM231 429h1v1h-1zM242 429h1v1h-1zM253 429h1v1h-1zM265 429h1v1h-1zM276 429h1v1h-1zM288 429h1v1h-1zM299 429h1v1h-1zM311 429h1v1h-1zM322 429h1v1h-1zM334 429h1v1h-1zM345 429h1v1h-1zM356 429h1v1h-1zM368 429h1v1h-1zM379 429h1v1h-1zM391 429h1v1h-1zM402 429h1v1h-1zM414 429h1v1h-1zM425 429h1v1h-1zM437 429h1v1h-1zM448 429h1v1h-1zM459 429h1v1h-1zM471 429h1v1h-1zM482 429h1v1h-1zM494 429h1v1h-1zM505 429h1v1h-1zM517 429h1v1h-1zM25 440h1v1h-1zM36 440h1v1h-1zM47 440h1v1h-1zM59 440h1v1h-1zM70 440h1v1h-1zM82 440h1v1h-1zM93 440h1v1h-1zM105 440h1v1h-1zM116 440h1v1h-1zM128 440h1v1h-1zM139 440h1v1h-1zM150 440h1v1h-1zM162 440h1v1h-1zM173 440h1v1h-1zM185 440h1v1h-1zM196 440h1v1h-1zM208 440h1v1h-1zM219 440h1v1h-1zM231 440h1v1h-1zM242 440h1v1h-1zM253 440h1v1h-1zM265 440h1v1h-1zM276 440h1v1h-1zM288 440h1v1h-1zM299 440h1v1h-1zM311 440h1v1h-1zM322 440h1v1h-1zM334 440h1v1h-1zM345 440h1v1h-1zM356 440h1v1h-1zM368 440h1v1h-1zM379 440h1v1h-1zM391 440h1v1h-1zM402 440h1v1h-1zM414 440h1v1h-1zM425 440h1v1h-1zM437 440h1v1h-1zM448 440h1v1h-1zM459 440h1v1h-1zM471 440h1v1h-1zM482 440h1v1h-1zM494 440h1v1h-1zM505 440h1v1h-1zM517 440h1v1h-1zM25 452h1v1h-1zM36 452h1v1h-1zM47 452h1v1h-1zM59 452h1v1h-1zM70 452h1v1h-1zM82 452h1v1h-1zM93 452h1v1h-1zM105 452h1v1h-1zM116 452h1v1h-1zM128 452h1v1h-1zM139 452h1v1h-1zM150 452h1v1h-1zM162 452h1v1h-1zM173 452h1v1h-1zM185 452h1v1h-1zM196 452h1v1h-1zM208 452h1v1h-1zM219 452h1v1h-1zM231 452h1v1h-1zM242 452h1v1h-1zM253 452h1v1h-1zM265 452h1v1h-1zM276 452h1v1h-1zM288 452h1v1h-1zM299 452h1v1h-1zM311 452h1v1h-1zM322 452h1v1h-1zM334 452h1v1h-1zM345 452h1v1h-1zM356 452h1v1h-1zM368 452h1v1h-1zM379 452h1v1h-1zM391 452h1v1h-1zM402 452h1v1h-1zM414 452h1v1h-1zM425 452h1v1h-1zM437 452h1v1h-1zM448 452h1v1h-1zM459 452h1v1h-1zM471 452h1v1h-1zM482 452h1v1h-1zM494 452h1v1h-1zM505 452h1v1h-1zM517 452h1v1h-1zM25 463h1v1h-1zM36 463h1v1h-1zM47 463h1v1h-1zM59 463h1v1h-1zM70 463h1v1h-1zM82 463h1v1h-1zM93 463h1v1h-1zM105 463h1v1h-1zM116 463h1v1h-1zM128 463h1v1h-1zM139 463h1v1h-1zM150 463h1v1h-1zM162 463h1v1h-1zM173 463h1v1h-1zM185 463h1v1h-1zM196 463h1v1h-1zM208 463h1v1h-1zM219 463h1v1h-1zM231 463h1v1h-1zM242 463h1v1h-1zM253 463h1v1h-1zM265 463h1v1h-1zM276 463h1v1h-1zM288 463h1v1h-1zM299 463h1v1h-1zM311 463h1v1h-1zM322 463h1v1h-1zM334 463h1v1h-1zM345 463h1v1h-1zM356 463h1v1h-1zM368 463h1v1h-1zM379 463h1v1h-1zM391 463h1v1h-1zM402 463h1v1h-1zM414 463h1v1h-1zM425 463h1v1h-1zM437 463h1v1h-1zM448 463h1v1h-1zM459 463h1v1h-1zM471 463h1v1h-1zM482 463h1v1h-1zM494 463h1v1h-1zM505 463h1v1h-1zM517 463h1v1h-1zM25 474h1v1h-1zM36 474h1v1h-1zM47 474h1v1h-1zM59 474h1v1h-1zM70 474h1v1h-1zM82 474h1v1h-1zM93 474h1v1h-1zM105 474h1v1h-1zM116 474h1v1h-1zM128 474h1v1h-1zM139 474h1v1h-1zM150 474h1v1h-1zM162 474h1v1h-1zM173 474h1v1h-1zM185 474h1v1h-1zM196 474h1v1h-1zM208 474h1v1h-1zM219 474h1v1h-1zM231 474h1v1h-1zM242 474h1v1h-1zM253 474h1v1h-1zM265 474h1v1h-1zM276 474h1v1h-1zM288 474h1v1h-1zM299 474h1v1h-1zM311 474h1v1h-1zM322 474h1v1h-1zM334 474h1v1h-1zM345 474h1v1h-1zM356 474h1v1h-1zM368 474h1v1h-1zM379 474h1v1h-1zM391 474h1v1h-1zM402 474h1v1h-1zM414 474h1v1h-1zM425 474h1v1h-1zM437 474h1v1h-1zM448 474h1v1h-1zM459 474h1v1h-1zM471 474h1v1h-1zM482 474h1v1h-1zM494 474h1v1h-1zM505 474h1v1h-1zM517 474h1v1h-1zM25 486h1v1h-1zM36 486h1v1h-1zM47 486h1v1h-1zM59 486h1v1h-1zM70 486h1v1h-1zM82 486h1v1h-1zM93 486h1v1h-1zM105 486h1v1h-1zM116 486h1v1h-1zM128 486h1v1h-1zM139 486h1v1h-1zM150 486h1v1h-1zM162 486h1v1h-1zM173 486h1v1h-1zM185 486h1v1h-1zM196 486h1v1h-1zM208 486h1v1h-1zM219 486h1v1h-1zM231 486h1v1h-1zM242 486h1v1h-1zM253 486h1v1h-1zM265 486h1v1h-1zM276 486h1v1h-1zM288 486h1v1h-1zM299 486h1v1h-1zM311 486h1v1h-1zM322 486h1v1h-1zM334 486h1v1h-1zM345 486h1v1h-1zM356 486h1v1h-1zM368 486h1v1h-1zM379 486h1v1h-1zM391 486h1v1h-1zM402 486h1v1h-1zM414 486h1v1h-1zM425 486h1v1h-1zM437 486h1v1h-1zM448 486h1v1h-1zM459 486h1v1h-1zM471 486h1v1h-1zM482 486h1v1h-1zM494 486h1v1h-1zM505 486h1v1h-1zM517 486h1v1h-1zM25 497h1v1h-1zM36 497h1v1h-1zM47 497h1v1h-1zM59 497h1v1h-1zM70 497h1v1h-1zM82 497h1v1h-1zM93 497h1v1h-1zM105 497h1v1h-1zM116 497h1v1h-1zM128 497h1v1h-1zM139 497h1v1h-1zM150 497h1v1h-1zM162 497h1v1h-1zM173 497h1v1h-1zM185 497h1v1h-1zM196 497h1v1h-1zM208 497h1v1h-1zM219 497h1v1h-1zM231 497h1v1h-1zM242 497h1v1h-1zM253 497h1v1h-1zM265 497h1v1h-1zM276 497h1v1h-1zM288 497h1v1h-1zM299 497h1v1h-1zM311 497h1v1h-1zM322 497h1v1h-1zM334 497h1v1h-1zM345 497h1v1h-1zM356 497h1v1h-1zM368 497h1v1h-1zM379 497h1v1h-1zM391 497h1v1h-1zM402 497h1v1h-1zM414 497h1v1h-1zM425 497h1v1h-1zM437 497h1v1h-1zM448 497h1v1h-1zM459 497h1v1h-1zM471 497h1v1h-1zM482 497h1v1h-1zM494 497h1v1h-1zM505 497h1v1h-1zM517 497h1v1h-1zM25 509h1v1h-1zM36 509h1v1h-1zM47 509h1v1h-1zM59 509h1v1h-1zM70 509h1v1h-1zM82 509h1v1h-1zM93 509h1v1h-1zM105 509h1v1h-1zM116 509h1v1h-1zM128 509h1v1h-1zM139 509h1v1h-1zM150 509h1v1h-1zM162 509h1v1h-1zM173 509h1v1h-1zM185 509h1v1h-1zM196 509h1v1h-1zM208 509h1v1h-1zM219 509h1v1h-1zM231 509h1v1h-1zM242 509h1v1h-1zM253 509h1v1h-1zM265 509h1v1h-1zM276 509h1v1h-1zM288 509h1v1h-1zM299 509h1v1h-1zM311 509h1v1h-1zM322 509h1v1h-1zM334 509h1v1h-1zM345 509h1v1h-1zM356 509h1v1h-1zM368 509h1v1h-1zM379 509h1v1h-1zM391 509h1v1h-1zM402 509h1v1h-1zM414 509h1v1h-1zM425 509h1v1h-1zM437 509h1v1h-1zM448 509h1v1h-1zM459 509h1v1h-1zM471 509h1v1h-1zM482 509h1v1h-1zM494 509h1v1h-1zM505 509h1v1h-1zM517 509h1v1h-1zM25 520h1v1h-1zM36 520h1v1h-1zM47 520h1v1h-1zM59 520h1v1h-1zM70 520h1v1h-1zM82 520h1v1h-1zM93 520h1v1h-1zM105 520h1v1h-1zM116 520h1v1h-1zM128 520h1v1h-1zM139 520h1v1h-1zM150 520h1v1h-1zM162 520h1v1h-1zM173 520h1v1h-1zM185 520h1v1h-1zM196 520h1v1h-1zM208 520h1v1h-1zM219 520h1v1h-1zM231 520h1v1h-1zM242 520h1v1h-1zM253 520h1v1h-1zM265 520h1v1h-1zM276 520h1v1h-1zM288 520h1v1h-1zM299 520h1v1h-1zM311 520h1v1h-1zM322 520h1v1h-1zM334 520h1v1h-1zM345 520h1v1h-1zM356 520h1v1h-1zM368 520h1v1h-1zM379 520h1v1h-1zM391 520h1v1h-1zM402 520h1v1h-1zM414 520h1v1h-1zM425 520h1v1h-1zM437 520h1v1h-1zM448 520h1v1h-1zM459 520h1v1h-1zM471 520h1v1h-1zM482 520h1v1h-1zM494 520h1v1h-1zM505 520h1v1h-1zM517 520h1v1h-1zM25 532h1v1h-1zM36 532h1v1h-1zM47 532h1v1h-1zM59 532h1v1h-1zM70 532h1v1h-1zM82 532h1v1h-1zM93 532h1v1h-1zM105 532h1v1h-1zM116 532h1v1h-1zM128 532h1v1h-1zM139 532h1v1h-1zM150 532h1v1h-1zM162 532h1v1h-1zM173 532h1v1h-1zM185 532h1v1h-1zM196 532h1v1h-1zM208 532h1v1h-1zM219 532h1v1h-1zM231 532h1v1h-1zM242 532h1v1h-1zM253 532h1v1h-1zM265 532h1v1h-1zM276 532h1v1h-1zM288 532h1v1h-1zM299 532h1v1h-1zM311 532h1v1h-1zM322 532h1v1h-1zM334 532h1v1h-1zM345 532h1v1h-1zM356 532h1v1h-1zM368 532h1v1h-1zM379 532h1v1h-1zM391 532h1v1h-1zM402 532h1v1h-1zM414 532h1v1h-1zM425 532h1v1h-1zM437 532h1v1h-1zM448 532h1v1h-1zM459 532h1v1h-1zM471 532h1v1h-1zM482 532h1v1h-1zM494 532h1v1h-1zM505 532h1v1h-1zM517 532h1v1h-1zM25 543h1v1h-1zM36 543h1v1h-1zM47 543h1v1h-1zM59 543h1v1h-1zM70 543h1v1h-1zM82 543h1v1h-1zM93 543h1v1h-1zM105 543h1v1h-1zM116 543h1v1h-1zM128 543h1v1h-1zM139 543h1v1h-1zM150 543h1v1h-1zM162 543h1v1h-1zM173 543h1v1h-1zM185 543h1v1h-1zM196 543h1v1h-1zM208 543h1v1h-1zM219 543h1v1h-1zM231 543h1v1h-1zM242 543h1v1h-1zM253 543h1v1h-1zM265 543h1v1h-1zM276 543h1v1h-1zM288 543h1v1h-1zM299 543h1v1h-1zM311 543h1v1h-1zM322 543h1v1h-1zM334 543h1v1h-1zM345 543h1v1h-1zM356 543h1v1h-1zM368 543h1v1h-1zM379 543h1v1h-1zM391 543h1v1h-1zM402 543h1v1h-1zM414 543h1v1h-1zM425 543h1v1h-1zM437 543h1v1h-1zM448 543h1v1h-1zM459 543h1v1h-1zM471 543h1v1h-1zM482 543h1v1h-1zM494 543h1v1h-1zM505 543h1v1h-1zM517 543h1v1h-1zM25 555h1v1h-1zM36 555h1v1h-1zM47 555h1v1h-1zM59 555h1v1h-1zM70 555h1v1h-1zM82 555h1v1h-1zM93 555h1v1h-1zM105 555h1v1h-1zM116 555h1v1h-1zM128 555h1v1h-1zM139 555h1v1h-1zM150 555h1v1h-1zM162 555h1v1h-1zM173 555h1v1h-1zM185 555h1v1h-1zM196 555h1v1h-1zM208 555h1v1h-1zM219 555h1v1h-1zM231 555h1v1h-1zM242 555h1v1h-1zM253 555h1v1h-1zM265 555h1v1h-1zM276 555h1v1h-1zM288 555h1v1h-1zM299 555h1v1h-1zM311 555h1v1h-1zM322 555h1v1h-1zM334 555h1v1h-1zM345 555h1v1h-1zM356 555h1v1h-1zM368 555h1v1h-1zM379 555h1v1h-1zM391 555h1v1h-1zM402 555h1v1h-1zM414 555h1v1h-1zM425 555h1v1h-1zM437 555h1v1h-1zM448 555h1v1h-1zM459 555h1v1h-1zM471 555h1v1h-1zM482 555h1v1h-1zM494 555h1v1h-1zM505 555h1v1h-1zM517 555h1v1h-1zM25 566h1v1h-1zM36 566h1v1h-1zM47 566h1v1h-1zM59 566h1v1h-1zM70 566h1v1h-1zM82 566h1v1h-1zM93 566h1v1h-1zM105 566h1v1h-1zM116 566h1v1h-1zM128 566h1v1h-1zM139 566h1v1h-1zM150 566h1v1h-1zM162 566h1v1h-1zM173 566h1v1h-1zM185 566h1v1h-1zM196 566h1v1h-1zM208 566h1v1h-1zM219 566h1v1h-1zM231 566h1v1h-1zM242 566h1v1h-1zM253 566h1v1h-1zM265 566h1v1h-1zM276 566h1v1h-1zM288 566h1v1h-1zM299 566h1v1h-1zM311 566h1v1h-1zM322 566h1v1h-1zM334 566h1v1h-1zM345 566h1v1h-1zM356 566h1v1h-1zM368 566h1v1h-1zM379 566h1v1h-1zM391 566h1v1h-1zM402 566h1v1h-1zM414 566h1v1h-1zM425 566h1v1h-1zM437 566h1v1h-1zM448 566h1v1h-1zM459 566h1v1h-1zM471 566h1v1h-1zM482 566h1v1h-1zM494 566h1v1h-1zM505 566h1v1h-1zM517 566h1v1h-1zM25 577h1v1h-1zM36 577h1v1h-1zM47 577h1v1h-1zM59 577h1v1h-1zM70 577h1v1h-1zM82 577h1v1h-1zM93 577h1v1h-1zM105 577h1v1h-1zM116 577h1v1h-1zM128 577h1v1h-1zM139 577h1v1h-1zM150 577h1v1h-1zM162 577h1v1h-1zM173 577h1v1h-1zM185 577h1v1h-1zM196 577h1v1h-1zM208 577h1v1h-1zM219 577h1v1h-1zM231 577h1v1h-1zM242 577h1v1h-1zM253 577h1v1h-1zM265 577h1v1h-1zM276 577h1v1h-1zM288 577h1v1h-1zM299 577h1v1h-1zM311 577h1v1h-1zM322 577h1v1h-1zM334 577h1v1h-1zM345 577h1v1h-1zM356 577h1v1h-1zM368 577h1v1h-1zM379 577h1v1h-1zM391 577h1v1h-1zM402 577h1v1h-1zM414 577h1v1h-1zM425 577h1v1h-1zM437 577h1v1h-1zM448 577h1v1h-1zM459 577h1v1h-1zM471 577h1v1h-1zM482 577h1v1h-1zM494 577h1v1h-1zM505 577h1v1h-1zM517 577h1v1h-1zM25 589h1v1h-1zM36 589h1v1h-1zM47 589h1v1h-1zM59 589h1v1h-1zM70 589h1v1h-1zM82 589h1v1h-1zM93 589h1v1h-1zM105 589h1v1h-1zM116 589h1v1h-1zM128 589h1v1h-1zM139 589h1v1h-1zM150 589h1v1h-1zM162 589h1v1h-1zM173 589h1v1h-1zM185 589h1v1h-1zM196 589h1v1h-1zM208 589h1v1h-1zM219 589h1v1h-1zM231 589h1v1h-1zM242 589h1v1h-1zM253 589h1v1h-1zM265 589h1v1h-1zM276 589h1v1h-1zM288 589h1v1h-1zM299 589h1v1h-1zM311 589h1v1h-1zM322 589h1v1h-1zM334 589h1v1h-1zM345 589h1v1h-1zM356 589h1v1h-1zM368 589h1v1h-1zM379 589h1v1h-1zM391 589h1v1h-1zM402 589h1v1h-1zM414 589h1v1h-1zM425 589h1v1h-1zM437 589h1v1h-1zM448 589h1v1h-1zM459 589h1v1h-1zM471 589h1v1h-1zM482 589h1v1h-1zM494 589h1v1h-1zM505 589h1v1h-1zM517 589h1v1h-1zM25 600h1v1h-1zM36 600h1v1h-1zM47 600h1v1h-1zM59 600h1v1h-1zM70 600h1v1h-1zM82 600h1v1h-1zM93 600h1v1h-1zM105 600h1v1h-1zM116 600h1v1h-1zM128 600h1v1h-1zM139 600h1v1h-1zM150 600h1v1h-1zM162 600h1v1h-1zM173 600h1v1h-1zM185 600h1v1h-1zM196 600h1v1h-1zM208 600h1v1h-1zM219 600h1v1h-1zM231 600h1v1h-1zM242 600h1v1h-1zM253 600h1v1h-1zM265 600h1v1h-1zM276 600h1v1h-1zM288 600h1v1h-1zM299 600h1v1h-1zM311 600h1v1h-1zM322 600h1v1h-1zM334 600h1v1h-1zM345 600h1v1h-1zM356 600h1v1h-1zM368 600h1v1h-1zM379 600h1v1h-1zM391 600h1v1h-1zM402 600h1v1h-1zM414 600h1v1h-1zM425 600h1v1h-1zM437 600h1v1h-1zM448 600h1v1h-1zM459 600h1v1h-1zM471 600h1v1h-1zM482 600h1v1h-1zM494 600h1v1h-1zM505 600h1v1h-1zM517 600h1v1h-1zM25 612h1v1h-1zM36 612h1v1h-1zM47 612h1v1h-1zM59 612h1v1h-1zM70 612h1v1h-1zM82 612h1v1h-1zM93 612h1v1h-1zM105 612h1v1h-1zM116 612h1v1h-1zM128 612h1v1h-1zM139 612h1v1h-1zM150 612h1v1h-1zM162 612h1v1h-1zM173 612h1v1h-1zM185 612h1v1h-1zM196 612h1v1h-1zM208 612h1v1h-1zM219 612h1v1h-1zM231 612h1v1h-1zM242 612h1v1h-1zM253 612h1v1h-1zM265 612h1v1h-1zM276 612h1v1h-1zM288 612h1v1h-1zM299 612h1v1h-1zM311 612h1v1h-1zM322 612h1v1h-1zM334 612h1v1h-1zM345 612h1v1h-1zM356 612h1v1h-1zM368 612h1v1h-1zM379 612h1v1h-1zM391 612h1v1h-1zM402 612h1v1h-1zM414 612h1v1h-1zM425 612h1v1h-1zM437 612h1v1h-1zM448 612h1v1h-1zM459 612h1v1h-1zM471 612h1v1h-1zM482 612h1v1h-1zM494 612h1v1h-1zM505 612h1v1h-1zM517 612h1v1h-1zM25 623h1v1h-1zM36 623h1v1h-1zM47 623h1v1h-1zM59 623h1v1h-1zM70 623h1v1h-1zM82 623h1v1h-1zM93 623h1v1h-1zM105 623h1v1h-1zM116 623h1v1h-1zM128 623h1v1h-1zM139 623h1v1h-1zM150 623h1v1h-1zM162 623h1v1h-1zM173 623h1v1h-1zM185 623h1v1h-1zM196 623h1v1h-1zM208 623h1v1h-1zM219 623h1v1h-1zM231 623h1v1h-1zM242 623h1v1h-1zM253 623h1v1h-1zM265 623h1v1h-1zM276 623h1v1h-1zM288 623h1v1h-1zM299 623h1v1h-1zM311 623h1v1h-1zM322 623h1v1h-1zM334 623h1v1h-1zM345 623h1v1h-1zM356 623h1v1h-1zM368 623h1v1h-1zM379 623h1v1h-1zM391 623h1v1h-1zM402 623h1v1h-1zM414 623h1v1h-1zM425 623h1v1h-1zM437 623h1v1h-1zM448 623h1v1h-1zM459 623h1v1h-1zM471 623h1v1h-1zM482 623h1v1h-1zM494 623h1v1h-1zM505 623h1v1h-1zM517 623h1v1h-1zM25 635h1v1h-1zM36 635h1v1h-1zM47 635h1v1h-1zM59 635h1v1h-1zM70 635h1v1h-1zM82 635h1v1h-1zM93 635h1v1h-1zM105 635h1v1h-1zM116 635h1v1h-1zM128 635h1v1h-1zM139 635h1v1h-1zM150 635h1v1h-1zM162 635h1v1h-1zM173 635h1v1h-1zM185 635h1v1h-1zM196 635h1v1h-1zM208 635h1v1h-1zM219 635h1v1h-1zM231 635h1v1h-1zM242 635h1v1h-1zM253 635h1v1h-1zM265 635h1v1h-1zM276 635h1v1h-1zM288 635h1v1h-1zM299 635h1v1h-1zM311 635h1v1h-1zM322 635h1v1h-1zM334 635h1v1h-1zM345 635h1v1h-1zM356 635h1v1h-1zM368 635h1v1h-1zM379 635h1v1h-1zM391 635h1v1h-1zM402 635h1v1h-1zM414 635h1v1h-1zM425 635h1v1h-1zM437 635h1v1h-1zM448 635h1v1h-1zM459 635h1v1h-1zM471 635h1v1h-1zM482 635h1v1h-1zM494 635h1v1h-1zM505 635h1v1h-1zM517 635h1v1h-1zM25 646h1v1h-1zM36 646h1v1h-1zM47 646h1v1h-1zM59 646h1v1h-1zM70 646h1v1h-1zM82 646h1v1h-1zM93 646h1v1h-1zM105 646h1v1h-1zM116 646h1v1h-1zM128 646h1v1h-1zM139 646h1v1h-1zM150 646h1v1h-1zM162 646h1v1h-1zM173 646h1v1h-1zM185 646h1v1h-1zM196 646h1v1h-1zM208 646h1v1h-1zM219 646h1v1h-1zM231 646h1v1h-1zM242 646h1v1h-1zM253 646h1v1h-1zM265 646h1v1h-1zM276 646h1v1h-1zM288 646h1v1h-1zM299 646h1v1h-1zM311 646h1v1h-1zM322 646h1v1h-1zM334 646h1v1h-1zM345 646h1v1h-1zM356 646h1v1h-1zM368 646h1v1h-1zM379 646h1v1h-1zM391 646h1v1h-1zM402 646h1v1h-1zM414 646h1v1h-1zM425 646h1v1h-1zM437 646h1v1h-1zM448 646h1v1h-1zM459 646h1v1h-1zM471 646h1v1h-1zM482 646h1v1h-1zM494 646h1v1h-1zM505 646h1v1h-1zM517 646h1v1h-1zM25 658h1v1h-1zM36 658h1v1h-1zM47 658h1v1h-1zM59 658h1v1h-1zM70 658h1v1h-1zM82 658h1v1h-1zM93 658h1v1h-1zM105 658h1v1h-1zM116 658h1v1h-1zM128 658h1v1h-1zM139 658h1v1h-1zM150 658h1v1h-1zM162 658h1v1h-1zM173 658h1v1h-1zM185 658h1v1h-1zM196 658h1v1h-1zM208 658h1v1h-1zM219 658h1v1h-1zM231 658h1v1h-1zM242 658h1v1h-1zM253 658h1v1h-1zM265 658h1v1h-1zM276 658h1v1h-1zM288 658h1v1h-1zM299 658h1v1h-1zM311 658h1v1h-1zM322 658h1v1h-1zM334 658h1v1h-1zM345 658h1v1h-1zM356 658h1v1h-1zM368 658h1v1h-1zM379 658h1v1h-1zM391 658h1v1h-1zM402 658h1v1h-1zM414 658h1v1h-1zM425 658h1v1h-1zM437 658h1v1h-1zM448 658h1v1h-1zM459 658h1v1h-1zM471 658h1v1h-1zM482 658h1v1h-1zM494 658h1v1h-1zM505 658h1v1h-1zM517 658h1v1h-1zM25 669h1v1h-1zM36 669h1v1h-1zM47 669h1v1h-1zM59 669h1v1h-1zM70 669h1v1h-1zM82 669h1v1h-1zM93 669h1v1h-1zM105 669h1v1h-1zM116 669h1v1h-1zM128 669h1v1h-1zM139 669h1v1h-1zM150 669h1v1h-1zM162 669h1v1h-1zM173 669h1v1h-1zM185 669h1v1h-1zM196 669h1v1h-1zM208 669h1v1h-1zM219 669h1v1h-1zM231 669h1v1h-1zM242 669h1v1h-1zM253 669h1v1h-1zM265 669h1v1h-1zM276 669h1v1h-1zM288 669h1v1h-1zM299 669h1v1h-1zM311 669h1v1h-1zM322 669h1v1h-1zM334 669h1v1h-1zM345 669h1v1h-1zM356 669h1v1h-1zM368 669h1v1h-1zM379 669h1v1h-1zM391 669h1v1h-1zM402 669h1v1h-1zM414 669h1v1h-1zM425 669h1v1h-1zM437 669h1v1h-1zM448 669h1v1h-1zM459 669h1v1h-1zM471 669h1v1h-1zM482 669h1v1h-1zM494 669h1v1h-1zM505 669h1v1h-1zM517 669h1v1h-1zM25 680h1v1h-1zM36 680h1v1h-1zM47 680h1v1h-1zM59 680h1v1h-1zM70 680h1v1h-1zM82 680h1v1h-1zM93 680h1v1h-1zM105 680h1v1h-1zM116 680h1v1h-1zM128 680h1v1h-1zM139 680h1v1h-1zM150 680h1v1h-1zM162 680h1v1h-1zM173 680h1v1h-1zM185 680h1v1h-1zM196 680h1v1h-1zM208 680h1v1h-1zM219 680h1v1h-1zM231 680h1v1h-1zM242 680h1v1h-1zM253 680h1v1h-1zM265 680h1v1h-1zM276 680h1v1h-1zM288 680h1v1h-1zM299 680h1v1h-1zM311 680h1v1h-1zM322 680h1v1h-1zM334 680h1v1h-1zM345 680h1v1h-1zM356 680h1v1h-1zM368 680h1v1h-1zM379 680h1v1h-1zM391 680h1v1h-1zM402 680h1v1h-1zM414 680h1v1h-1zM425 680h1v1h-1zM437 680h1v1h-1zM448 680h1v1h-1zM459 680h1v1h-1zM471 680h1v1h-1zM482 680h1v1h-1zM494 680h1v1h-1zM505 680h1v1h-1zM517 680h1v1h-1zM25 692h1v1h-1zM36 692h1v1h-1zM47 692h1v1h-1zM59 692h1v1h-1zM70 692h1v1h-1zM82 692h1v1h-1zM93 692h1v1h-1zM105 692h1v1h-1zM116 692h1v1h-1zM128 692h1v1h-1zM139 692h1v1h-1zM150 692h1v1h-1zM162 692h1v1h-1zM173 692h1v1h-1zM185 692h1v1h-1zM196 692h1v1h-1zM208 692h1v1h-1zM219 692h1v1h-1zM231 692h1v1h-1zM242 692h1v1h-1zM253 692h1v1h-1zM265 692h1v1h-1zM276 692h1v1h-1zM288 692h1v1h-1zM299 692h1v1h-1zM311 692h1v1h-1zM322 692h1v1h-1zM334 692h1v1h-1zM345 692h1v1h-1zM356 692h1v1h-1zM368 692h1v1h-1zM379 692h1v1h-1zM391 692h1v1h-1zM402 692h1v1h-1zM414 692h1v1h-1zM425 692h1v1h-1zM437 692h1v1h-1zM448 692h1v1h-1zM459 692h1v1h-1zM471 692h1v1h-1zM482 692h1v1h-1zM494 692h1v1h-1zM505 692h1v1h-1zM517 692h1v1h-1zM25 703h1v1h-1zM36 703h1v1h-1zM47 703h1v1h-1zM59 703h1v1h-1zM70 703h1v1h-1zM82 703h1v1h-1zM93 703h1v1h-1zM105 703h1v1h-1zM116 703h1v1h-1zM128 703h1v1h-1zM139 703h1v1h-1zM150 703h1v1h-1zM162 703h1v1h-1zM173 703h1v1h-1zM185 703h1v1h-1zM196 703h1v1h-1zM208 703h1v1h-1zM219 703h1v1h-1zM231 703h1v1h-1zM242 703h1v1h-1zM253 703h1v1h-1zM265 703h1v1h-1zM276 703h1v1h-1zM288 703h1v1h-1zM299 703h1v1h-1zM311 703h1v1h-1zM322 703h1v1h-1zM334 703h1v1h-1zM345 703h1v1h-1zM356 703h1v1h-1zM368 703h1v1h-1zM379 703h1v1h-1zM391 703h1v1h-1zM402 703h1v1h-1zM414 703h1v1h-1zM425 703h1v1h-1zM437 703h1v1h-1zM448 703h1v1h-1zM459 703h1v1h-1zM471 703h1v1h-1zM482 703h1v1h-1zM494 703h1v1h-1zM505 703h1v1h-1zM517 703h1v1h-1zM25 715h1v1h-1zM36 715h1v1h-1zM47 715h1v1h-1zM59 715h1v1h-1zM70 715h1v1h-1zM82 715h1v1h-1zM93 715h1v1h-1zM105 715h1v1h-1zM116 715h1v1h-1zM128 715h1v1h-1zM139 715h1v1h-1zM150 715h1v1h-1zM162 715h1v1h-1zM173 715h1v1h-1zM185 715h1v1h-1zM196 715h1v1h-1zM208 715h1v1h-1zM219 715h1v1h-1zM231 715h1v1h-1zM242 715h1v1h-1zM253 715h1v1h-1zM265 715h1v1h-1zM276 715h1v1h-1zM288 715h1v1h-1zM299 715h1v1h-1zM311 715h1v1h-1zM322 715h1v1h-1zM334 715h1v1h-1zM345 715h1v1h-1zM356 715h1v1h-1zM368 715h1v1h-1zM379 715h1v1h-1zM391 715h1v1h-1zM402 715h1v1h-1zM414 715h1v1h-1zM425 715h1v1h-1zM437 715h1v1h-1zM448 715h1v1h-1zM459 715h1v1h-1zM471 715h1v1h-1zM482 715h1v1h-1zM494 715h1v1h-1zM505 715h1v1h-1zM517 715h1v1h-1zM25 726h1v1h-1zM36 726h1v1h-1zM47 726h1v1h-1zM59 726h1v1h-1zM70 726h1v1h-1zM82 726h1v1h-1zM93 726h1v1h-1zM105 726h1v1h-1zM116 726h1v1h-1zM128 726h1v1h-1zM139 726h1v1h-1zM150 726h1v1h-1zM162 726h1v1h-1zM173 726h1v1h-1zM185 726h1v1h-1zM196 726h1v1h-1zM208 726h1v1h-1zM219 726h1v1h-1zM231 726h1v1h-1zM242 726h1v1h-1zM253 726h1v1h-1zM265 726h1v1h-1zM276 726h1v1h-1zM288 726h1v1h-1zM299 726h1v1h-1zM311 726h1v1h-1zM322 726h1v1h-1zM334 726h1v1h-1zM345 726h1v1h-1zM356 726h1v1h-1zM368 726h1v1h-1zM379 726h1v1h-1zM391 726h1v1h-1zM402 726h1v1h-1zM414 726h1v1h-1zM425 726h1v1h-1zM437 726h1v1h-1zM448 726h1v1h-1zM459 726h1v1h-1zM471 726h1v1h-1zM482 726h1v1h-1zM494 726h1v1h-1zM505 726h1v1h-1zM517 726h1v1h-1z" fill="#000"/>
<polyline points="30.5,474.5 30.5,360.5 53.5,360.5 53.5,380.5" fill="none" stroke="#0000ff" stroke-width="1"/>
<polyline points="104.5,440.5 311.5,440.5" fill="none" stroke="#0000ff" stroke-width="1"/>
<polyline points="311.5,440.5 344.5,440.5" fill="none" stroke="#0000ff" stroke-width="1"/>
<polyline points="133.5,440.5 133.5,459.5" fill="none" stroke="#0000ff" stroke-width="1"/>
<polyline points="311.5,440.5 311.5,459.5" fill="none" stroke="#0000ff" stroke-width="1"/>
<polyline points="253.5,440.5 253.5,403.5" fill="none" stroke="#0000ff" stroke-width="1"/>
<polyline points="253.5,379.5 253.5,360.5 288.5,360.5 288.5,380.5" fill="none" stroke="#0000ff" stroke-width="1"/>
<polyline points="30.5,474.5 124.5,474.5" fill="none" stroke="#0000ff" stroke-width="1"/>
<polyline points="99.5,462.5 99.5,457.5 125.5,457.5" fill="none" stroke="#0000ff" stroke-width="1"/>
<polyline points="320.5,474.5 379.5,474.5 379.5,360.5 402.5,360.5 402.5,380.5" fill="none" stroke="#0000ff" stroke-width="1"/>
<polyline points="320.5,457.5 351.5,457.5 351.5,462.5" fill="none" stroke="#0000ff" stroke-width="1"/>
<rect x="132" y="439" width="3" height="3" fill="#0000ff" />
<rect x="252" y="439" width="3" height="3" fill="#0000ff" />
<rect x="310" y="439" width="3" height="3" fill="#0000ff" />
<circle cx="53.5" cy="391.5" r="11" fill="none" stroke="#000070" stroke-width="1"/>
<path d="M50 384.5h7 M53.5 381v7 M50 399.5h7" stroke="#000070" stroke-width="1" fill="none"/>
<path d="M53.5 402v4" stroke="#0000ff" stroke-width="1"/>
<path d="M46.5 406.5 H60.5 L53.5 412.5 Z" fill="none" stroke="#0000ff" stroke-width="1"/>
<circle cx="288.5" cy="391.5" r="11" fill="none" stroke="#000070" stroke-width="1"/>
<path d="M285 384.5h7 M288.5 381v7 M285 399.5h7" stroke="#000070" stroke-width="1" fill="none"/>
<path d="M288.5 402v4" stroke="#0000ff" stroke-width="1"/>
<path d="M281.5 406.5 H295.5 L288.5 412.5 Z" fill="none" stroke="#0000ff" stroke-width="1"/>
<circle cx="402.5" cy="391.5" r="11" fill="none" stroke="#000070" stroke-width="1"/>
<path d="M399 384.5h7 M402.5 381v7 M399 399.5h7" stroke="#000070" stroke-width="1" fill="none"/>
<path d="M402.5 402v4" stroke="#0000ff" stroke-width="1"/>
<path d="M395.5 406.5 H409.5 L402.5 412.5 Z" fill="none" stroke="#0000ff" stroke-width="1"/>
<path d="M92.5 463.5 H106.5 L99.5 469.5 Z" fill="none" stroke="#0000ff" stroke-width="1"/>
<path d="M133.5 471v9" stroke="#0000ff" stroke-width="1"/>
<path d="M126.5 480.5 H140.5 L133.5 486.5 Z" fill="none" stroke="#0000ff" stroke-width="1"/>
<path d="M311.5 471v9" stroke="#0000ff" stroke-width="1"/>
<path d="M304.5 480.5 H318.5 L311.5 486.5 Z" fill="none" stroke="#0000ff" stroke-width="1"/>
<path d="M344.5 463.5 H358.5 L351.5 469.5 Z" fill="none" stroke="#0000ff" stroke-width="1"/>
<polyline points="253.5,379.5 259.5,383.5 248.5,389.5 259.5,394.5 248.5,400.5 253.5,403.5" fill="none" stroke="#000070" stroke-width="1"/>
<circle cx="133.5" cy="465.5" r="11" fill="none" stroke="#000070" stroke-width="1"/>
<path d="M133.5 459L141.5 468" stroke="#000070" stroke-width="1"/>
<rect x="140" y="467" width="2" height="2" fill="#000070" />
<path d="M116 460.5h4 M116 472.5h5 M118.5 470v5" stroke="#000070" stroke-width="1"/>
<path d="M133.5 470v7" stroke="#000070" stroke-width="1"/>
<circle cx="311.5" cy="465.5" r="11" fill="none" stroke="#000070" stroke-width="1"/>
<path d="M311.5 459L303.5 468" stroke="#000070" stroke-width="1"/>
<rect x="303" y="467" width="2" height="2" fill="#000070" />
<path d="M325 460.5h4 M325 472.5h5 M327.5 470v5" stroke="#000070" stroke-width="1"/>
<path d="M311.5 470v7" stroke="#000070" stroke-width="1"/>
<path d="M77.5 435.5H99.5L104.5 440.5L99.5 445.5H77.5Z" fill="none" stroke="#0000ff" stroke-width="1"/>
<path d="M344.5 435.5H367.5L372.5 440.5L367.5 445.5H344.5Z" fill="none" stroke="#0000ff" stroke-width="1"/>
<text x="32.4" y="358" font-family='"Liberation Sans", sans-serif' font-size="8.3" fill="#000000" font-weight="bold" font-style="normal" text-anchor="start" textLength="18.8" lengthAdjust="spacingAndGlyphs" stroke="#000" stroke-width="0.12">PDA1</text>
<text x="381.6" y="358" font-family='"Liberation Sans", sans-serif' font-size="8.3" fill="#000000" font-weight="bold" font-style="normal" text-anchor="start" textLength="19.4" lengthAdjust="spacingAndGlyphs" stroke="#000" stroke-width="0.12">PDA2</text>
<text x="62.2" y="380" font-family='"Liberation Sans", sans-serif' font-size="8.3" fill="#000000" font-weight="bold" font-style="normal" text-anchor="start" textLength="8.8" lengthAdjust="spacingAndGlyphs" stroke="#000" stroke-width="0.12">V3</text>
<text x="296.5" y="380" font-family='"Liberation Sans", sans-serif' font-size="8.3" fill="#000000" font-weight="bold" font-style="normal" text-anchor="start" textLength="8.5" lengthAdjust="spacingAndGlyphs" stroke="#000" stroke-width="0.12">V2</text>
<text x="411.4" y="380" font-family='"Liberation Sans", sans-serif' font-size="8.3" fill="#000000" font-weight="bold" font-style="normal" text-anchor="start" textLength="8.5" lengthAdjust="spacingAndGlyphs" stroke="#000" stroke-width="0.12">V4</text>
<text x="261.7" y="389" font-family='"Liberation Sans", sans-serif' font-size="8.3" fill="#000000" font-weight="bold" font-style="normal" text-anchor="start" textLength="9" lengthAdjust="spacingAndGlyphs" stroke="#000" stroke-width="0.12">R2</text>
<text x="261.2" y="402.5" font-family='"Liberation Sans", sans-serif' font-size="8.3" fill="#000000" font-weight="bold" font-style="normal" text-anchor="start" textLength="15.8" lengthAdjust="spacingAndGlyphs" stroke="#000" stroke-width="0.12">4700</text>
<text x="296" y="409" font-family='"Liberation Sans", sans-serif' font-size="8.3" fill="#000000" font-weight="bold" font-style="normal" text-anchor="start" textLength="4.5" lengthAdjust="spacingAndGlyphs" stroke="#000" stroke-width="0.12">5</text>
<text x="41.4" y="423" font-family='"Liberation Sans", sans-serif' font-size="8.3" fill="#000000" font-weight="bold" font-style="normal" text-anchor="start" textLength="94.9" lengthAdjust="spacingAndGlyphs" stroke="#000" stroke-width="0.12">PULSE(0 1 0 1n 1n .05 .1 2)</text>
<text x="389.5" y="423" font-family='"Liberation Sans", sans-serif' font-size="8.3" fill="#000000" font-weight="bold" font-style="normal" text-anchor="start" textLength="100.9" lengthAdjust="spacingAndGlyphs" stroke="#000" stroke-width="0.12">PULSE(0 1 0.3 1n 1n .05 .1 4)</text>
<text x="80.8" y="443" font-family='"Liberation Sans", sans-serif' font-size="8.3" fill="#000000" font-weight="bold" font-style="normal" text-anchor="start" textLength="18.5" lengthAdjust="spacingAndGlyphs" stroke="#000" stroke-width="0.12">SDA1</text>
<text x="347" y="443" font-family='"Liberation Sans", sans-serif' font-size="8.3" fill="#000000" font-weight="bold" font-style="normal" text-anchor="start" textLength="18.8" lengthAdjust="spacingAndGlyphs" stroke="#000" stroke-width="0.12">SDA2</text>
<text x="143" y="455" font-family='"Liberation Sans", sans-serif' font-size="8.3" fill="#000000" font-weight="bold" font-style="normal" text-anchor="start" textLength="8" lengthAdjust="spacingAndGlyphs" stroke="#000" stroke-width="0.12">S1</text>
<text x="294" y="455.5" font-family='"Liberation Sans", sans-serif' font-size="8.3" fill="#000000" font-weight="bold" font-style="normal" text-anchor="start" textLength="8" lengthAdjust="spacingAndGlyphs" stroke="#000" stroke-width="0.12">S2</text>
<text x="142.5" y="483" font-family='"Liberation Sans", sans-serif' font-size="8.3" fill="#000000" font-weight="bold" font-style="normal" text-anchor="start" textLength="32.8" lengthAdjust="spacingAndGlyphs" stroke="#000" stroke-width="0.12">MySwitch</text>
<text x="268.8" y="483" font-family='"Liberation Sans", sans-serif' font-size="8.3" fill="#000000" font-weight="bold" font-style="normal" text-anchor="start" textLength="32.6" lengthAdjust="spacingAndGlyphs" stroke="#000" stroke-width="0.12">MySwitch</text>
<text x="59.4" y="507" font-family='"Liberation Sans", sans-serif' font-size="8.3" fill="#000000" font-weight="bold" font-style="normal" text-anchor="start" textLength="180.5" lengthAdjust="spacingAndGlyphs" stroke="#000" stroke-width="0.12">.model MySwitch SW(Ron=.1 Roff=1Meg Vt=0.5 )</text>
<text x="59.4" y="526.5" font-family='"Liberation Sans", sans-serif' font-size="8.3" fill="#000000" font-weight="bold" font-style="normal" text-anchor="start" textLength="24.3" lengthAdjust="spacingAndGlyphs" stroke="#000" stroke-width="0.12">.tran .5</text>
<line x1="580" y1="172.5" x2="1025" y2="172.5" stroke="#9c9c9c" stroke-width="1" stroke-dasharray="3 3"/>
<line x1="580" y1="189.5" x2="1025" y2="189.5" stroke="#9c9c9c" stroke-width="1" stroke-dasharray="3 3"/>
<line x1="580" y1="206.5" x2="1025" y2="206.5" stroke="#9c9c9c" stroke-width="1" stroke-dasharray="3 3"/>
<line x1="580" y1="223.5" x2="1025" y2="223.5" stroke="#9c9c9c" stroke-width="1" stroke-dasharray="3 3"/>
<line x1="580" y1="240.5" x2="1025" y2="240.5" stroke="#9c9c9c" stroke-width="1" stroke-dasharray="3 3"/>
<line x1="580" y1="257.5" x2="1025" y2="257.5" stroke="#9c9c9c" stroke-width="1" stroke-dasharray="3 3"/>
<line x1="580" y1="274.5" x2="1025" y2="274.5" stroke="#9c9c9c" stroke-width="1" stroke-dasharray="3 3"/>
<line x1="580" y1="291.5" x2="1025" y2="291.5" stroke="#9c9c9c" stroke-width="1" stroke-dasharray="3 3"/>
<line x1="580" y1="308.5" x2="1025" y2="308.5" stroke="#9c9c9c" stroke-width="1" stroke-dasharray="3 3"/>
<line x1="669.5" y1="155" x2="669.5" y2="324" stroke="#9c9c9c" stroke-width="1" stroke-dasharray="3 3"/>
<line x1="758.5" y1="155" x2="758.5" y2="324" stroke="#9c9c9c" stroke-width="1" stroke-dasharray="3 3"/>
<line x1="848.5" y1="155" x2="848.5" y2="324" stroke="#9c9c9c" stroke-width="1" stroke-dasharray="3 3"/>
<line x1="937.5" y1="155" x2="937.5" y2="324" stroke="#9c9c9c" stroke-width="1" stroke-dasharray="3 3"/>
<rect x="580.5" y="155.5" width="446" height="170" fill="none" stroke="#a8a8a8" stroke-width="3"/>
<line x1="571" y1="155.5" x2="580" y2="155.5" stroke="#a8a8a8" stroke-width="3"/>
<text x="545" y="160" font-family='"Liberation Sans", sans-serif' font-size="13.6" fill="#c0c0c0" font-weight="normal" font-style="normal" text-anchor="start" textLength="27" lengthAdjust="spacing" stroke="#c0c0c0" stroke-width="0.6">1.0V</text>
<line x1="571" y1="172.5" x2="580" y2="172.5" stroke="#a8a8a8" stroke-width="3"/>
<text x="545" y="177" font-family='"Liberation Sans", sans-serif' font-size="13.6" fill="#c0c0c0" font-weight="normal" font-style="normal" text-anchor="start" textLength="27" lengthAdjust="spacing" stroke="#c0c0c0" stroke-width="0.6">0.9V</text>
<line x1="571" y1="189.5" x2="580" y2="189.5" stroke="#a8a8a8" stroke-width="3"/>
<text x="545" y="194" font-family='"Liberation Sans", sans-serif' font-size="13.6" fill="#c0c0c0" font-weight="normal" font-style="normal" text-anchor="start" textLength="27" lengthAdjust="spacing" stroke="#c0c0c0" stroke-width="0.6">0.8V</text>
<line x1="571" y1="206.5" x2="580" y2="206.5" stroke="#a8a8a8" stroke-width="3"/>
<text x="545" y="211" font-family='"Liberation Sans", sans-serif' font-size="13.6" fill="#c0c0c0" font-weight="normal" font-style="normal" text-anchor="start" textLength="27" lengthAdjust="spacing" stroke="#c0c0c0" stroke-width="0.6">0.7V</text>
<line x1="571" y1="223.5" x2="580" y2="223.5" stroke="#a8a8a8" stroke-width="3"/>
<text x="545" y="228" font-family='"Liberation Sans", sans-serif' font-size="13.6" fill="#c0c0c0" font-weight="normal" font-style="normal" text-anchor="start" textLength="27" lengthAdjust="spacing" stroke="#c0c0c0" stroke-width="0.6">0.6V</text>
<line x1="571" y1="240.5" x2="580" y2="240.5" stroke="#a8a8a8" stroke-width="3"/>
<text x="545" y="245" font-family='"Liberation Sans", sans-serif' font-size="13.6" fill="#c0c0c0" font-weight="normal" font-style="normal" text-anchor="start" textLength="27" lengthAdjust="spacing" stroke="#c0c0c0" stroke-width="0.6">0.5V</text>
<line x1="571" y1="257.5" x2="580" y2="257.5" stroke="#a8a8a8" stroke-width="3"/>
<text x="545" y="262" font-family='"Liberation Sans", sans-serif' font-size="13.6" fill="#c0c0c0" font-weight="normal" font-style="normal" text-anchor="start" textLength="27" lengthAdjust="spacing" stroke="#c0c0c0" stroke-width="0.6">0.4V</text>
<line x1="571" y1="274.5" x2="580" y2="274.5" stroke="#a8a8a8" stroke-width="3"/>
<text x="545" y="279" font-family='"Liberation Sans", sans-serif' font-size="13.6" fill="#c0c0c0" font-weight="normal" font-style="normal" text-anchor="start" textLength="27" lengthAdjust="spacing" stroke="#c0c0c0" stroke-width="0.6">0.3V</text>
<line x1="571" y1="291.5" x2="580" y2="291.5" stroke="#a8a8a8" stroke-width="3"/>
<text x="545" y="296" font-family='"Liberation Sans", sans-serif' font-size="13.6" fill="#c0c0c0" font-weight="normal" font-style="normal" text-anchor="start" textLength="27" lengthAdjust="spacing" stroke="#c0c0c0" stroke-width="0.6">0.2V</text>
<line x1="571" y1="308.5" x2="580" y2="308.5" stroke="#a8a8a8" stroke-width="3"/>
<text x="545" y="313" font-family='"Liberation Sans", sans-serif' font-size="13.6" fill="#c0c0c0" font-weight="normal" font-style="normal" text-anchor="start" textLength="27" lengthAdjust="spacing" stroke="#c0c0c0" stroke-width="0.6">0.1V</text>
<line x1="571" y1="325.5" x2="580" y2="325.5" stroke="#a8a8a8" stroke-width="3"/>
<text x="545" y="330" font-family='"Liberation Sans", sans-serif' font-size="13.6" fill="#c0c0c0" font-weight="normal" font-style="normal" text-anchor="start" textLength="27" lengthAdjust="spacing" stroke="#c0c0c0" stroke-width="0.6">0.0V</text>
<text x="803" y="150" font-family='"Liberation Sans", sans-serif' font-size="13.6" fill="#22ee22" font-weight="normal" font-style="normal" text-anchor="middle" textLength="47.5" lengthAdjust="spacing" stroke="#22ee22" stroke-width="0.55">V(pda1)</text>
<polyline points="580.5,325.5 580.5,155.5 625.5,155.5 625.5,325.5 669.5,325.5 669.5,155.5 714.5,155.5 714.5,325.5 1026.5,325.5 1026.5,325.5" fill="none" stroke="#22ee22" stroke-width="3" stroke-linejoin="miter" stroke-linecap="square"/>
<line x1="580" y1="363.5" x2="1025" y2="363.5" stroke="#9c9c9c" stroke-width="1" stroke-dasharray="3 3"/>
<line x1="580" y1="380.5" x2="1025" y2="380.5" stroke="#9c9c9c" stroke-width="1" stroke-dasharray="3 3"/>
<line x1="580" y1="397.5" x2="1025" y2="397.5" stroke="#9c9c9c" stroke-width="1" stroke-dasharray="3 3"/>
<line x1="580" y1="414.5" x2="1025" y2="414.5" stroke="#9c9c9c" stroke-width="1" stroke-dasharray="3 3"/>
<line x1="580" y1="431.5" x2="1025" y2="431.5" stroke="#9c9c9c" stroke-width="1" stroke-dasharray="3 3"/>
<line x1="580" y1="448.5" x2="1025" y2="448.5" stroke="#9c9c9c" stroke-width="1" stroke-dasharray="3 3"/>
<line x1="580" y1="465.5" x2="1025" y2="465.5" stroke="#9c9c9c" stroke-width="1" stroke-dasharray="3 3"/>
<line x1="580" y1="482.5" x2="1025" y2="482.5" stroke="#9c9c9c" stroke-width="1" stroke-dasharray="3 3"/>
<line x1="580" y1="499.5" x2="1025" y2="499.5" stroke="#9c9c9c" stroke-width="1" stroke-dasharray="3 3"/>
<line x1="669.5" y1="346" x2="669.5" y2="515" stroke="#9c9c9c" stroke-width="1" stroke-dasharray="3 3"/>
<line x1="758.5" y1="346" x2="758.5" y2="515" stroke="#9c9c9c" stroke-width="1" stroke-dasharray="3 3"/>
<line x1="848.5" y1="346" x2="848.5" y2="515" stroke="#9c9c9c" stroke-width="1" stroke-dasharray="3 3"/>
<line x1="937.5" y1="346" x2="937.5" y2="515" stroke="#9c9c9c" stroke-width="1" stroke-dasharray="3 3"/>
<rect x="580.5" y="346.5" width="446" height="170" fill="none" stroke="#a8a8a8" stroke-width="3"/>
<line x1="571" y1="346.5" x2="580" y2="346.5" stroke="#a8a8a8" stroke-width="3"/>
<text x="545" y="351" font-family='"Liberation Sans", sans-serif' font-size="13.6" fill="#c0c0c0" font-weight="normal" font-style="normal" text-anchor="start" textLength="27" lengthAdjust="spacing" stroke="#c0c0c0" stroke-width="0.6">1.0V</text>
<line x1="571" y1="363.5" x2="580" y2="363.5" stroke="#a8a8a8" stroke-width="3"/>
<text x="545" y="368" font-family='"Liberation Sans", sans-serif' font-size="13.6" fill="#c0c0c0" font-weight="normal" font-style="normal" text-anchor="start" textLength="27" lengthAdjust="spacing" stroke="#c0c0c0" stroke-width="0.6">0.9V</text>
<line x1="571" y1="380.5" x2="580" y2="380.5" stroke="#a8a8a8" stroke-width="3"/>
<text x="545" y="385" font-family='"Liberation Sans", sans-serif' font-size="13.6" fill="#c0c0c0" font-weight="normal" font-style="normal" text-anchor="start" textLength="27" lengthAdjust="spacing" stroke="#c0c0c0" stroke-width="0.6">0.8V</text>
<line x1="571" y1="397.5" x2="580" y2="397.5" stroke="#a8a8a8" stroke-width="3"/>
<text x="545" y="402" font-family='"Liberation Sans", sans-serif' font-size="13.6" fill="#c0c0c0" font-weight="normal" font-style="normal" text-anchor="start" textLength="27" lengthAdjust="spacing" stroke="#c0c0c0" stroke-width="0.6">0.7V</text>
<line x1="571" y1="414.5" x2="580" y2="414.5" stroke="#a8a8a8" stroke-width="3"/>
<text x="545" y="419" font-family='"Liberation Sans", sans-serif' font-size="13.6" fill="#c0c0c0" font-weight="normal" font-style="normal" text-anchor="start" textLength="27" lengthAdjust="spacing" stroke="#c0c0c0" stroke-width="0.6">0.6V</text>
<line x1="571" y1="431.5" x2="580" y2="431.5" stroke="#a8a8a8" stroke-width="3"/>
<text x="545" y="436" font-family='"Liberation Sans", sans-serif' font-size="13.6" fill="#c0c0c0" font-weight="normal" font-style="normal" text-anchor="start" textLength="27" lengthAdjust="spacing" stroke="#c0c0c0" stroke-width="0.6">0.5V</text>
<line x1="571" y1="448.5" x2="580" y2="448.5" stroke="#a8a8a8" stroke-width="3"/>
<text x="545" y="453" font-family='"Liberation Sans", sans-serif' font-size="13.6" fill="#c0c0c0" font-weight="normal" font-style="normal" text-anchor="start" textLength="27" lengthAdjust="spacing" stroke="#c0c0c0" stroke-width="0.6">0.4V</text>
<line x1="571" y1="465.5" x2="580" y2="465.5" stroke="#a8a8a8" stroke-width="3"/>
<text x="545" y="470" font-family='"Liberation Sans", sans-serif' font-size="13.6" fill="#c0c0c0" font-weight="normal" font-style="normal" text-anchor="start" textLength="27" lengthAdjust="spacing" stroke="#c0c0c0" stroke-width="0.6">0.3V</text>
<line x1="571" y1="482.5" x2="580" y2="482.5" stroke="#a8a8a8" stroke-width="3"/>
<text x="545" y="487" font-family='"Liberation Sans", sans-serif' font-size="13.6" fill="#c0c0c0" font-weight="normal" font-style="normal" text-anchor="start" textLength="27" lengthAdjust="spacing" stroke="#c0c0c0" stroke-width="0.6">0.2V</text>
<line x1="571" y1="499.5" x2="580" y2="499.5" stroke="#a8a8a8" stroke-width="3"/>
<text x="545" y="504" font-family='"Liberation Sans", sans-serif' font-size="13.6" fill="#c0c0c0" font-weight="normal" font-style="normal" text-anchor="start" textLength="27" lengthAdjust="spacing" stroke="#c0c0c0" stroke-width="0.6">0.1V</text>
<line x1="571" y1="516.5" x2="580" y2="516.5" stroke="#a8a8a8" stroke-width="3"/>
<text x="545" y="521" font-family='"Liberation Sans", sans-serif' font-size="13.6" fill="#c0c0c0" font-weight="normal" font-style="normal" text-anchor="start" textLength="27" lengthAdjust="spacing" stroke="#c0c0c0" stroke-width="0.6">0.0V</text>
<text x="803" y="341" font-family='"Liberation Sans", sans-serif' font-size="13.6" fill="#0000f0" font-weight="normal" font-style="normal" text-anchor="middle" textLength="47.5" lengthAdjust="spacing" stroke="#0000f0" stroke-width="0.55">V(pda2)</text>
<polyline points="580.5,516.5 848.5,516.5 848.5,346.5 892.5,346.5 892.5,516.5 937.5,516.5 937.5,346.5 981.5,346.5 981.5,516.5 1026.5,516.5 1026.5,516.5" fill="none" stroke="#0000f0" stroke-width="3" stroke-linejoin="miter" stroke-linecap="square"/>
<line x1="580" y1="554.5" x2="1025" y2="554.5" stroke="#9c9c9c" stroke-width="1" stroke-dasharray="3 3"/>
<line x1="580" y1="572.5" x2="1025" y2="572.5" stroke="#9c9c9c" stroke-width="1" stroke-dasharray="3 3"/>
<line x1="580" y1="589.5" x2="1025" y2="589.5" stroke="#9c9c9c" stroke-width="1" stroke-dasharray="3 3"/>
<line x1="580" y1="606.5" x2="1025" y2="606.5" stroke="#9c9c9c" stroke-width="1" stroke-dasharray="3 3"/>
<line x1="580" y1="624.5" x2="1025" y2="624.5" stroke="#9c9c9c" stroke-width="1" stroke-dasharray="3 3"/>
<line x1="580" y1="641.5" x2="1025" y2="641.5" stroke="#9c9c9c" stroke-width="1" stroke-dasharray="3 3"/>
<line x1="580" y1="658.5" x2="1025" y2="658.5" stroke="#9c9c9c" stroke-width="1" stroke-dasharray="3 3"/>
<line x1="580" y1="675.5" x2="1025" y2="675.5" stroke="#9c9c9c" stroke-width="1" stroke-dasharray="3 3"/>
<line x1="580" y1="693.5" x2="1025" y2="693.5" stroke="#9c9c9c" stroke-width="1" stroke-dasharray="3 3"/>
<line x1="669.5" y1="537" x2="669.5" y2="709" stroke="#9c9c9c" stroke-width="1" stroke-dasharray="3 3"/>
<line x1="758.5" y1="537" x2="758.5" y2="709" stroke="#9c9c9c" stroke-width="1" stroke-dasharray="3 3"/>
<line x1="848.5" y1="537" x2="848.5" y2="709" stroke="#9c9c9c" stroke-width="1" stroke-dasharray="3 3"/>
<line x1="937.5" y1="537" x2="937.5" y2="709" stroke="#9c9c9c" stroke-width="1" stroke-dasharray="3 3"/>
<rect x="580.5" y="537.5" width="446" height="173" fill="none" stroke="#a8a8a8" stroke-width="3"/>
<line x1="571" y1="537.5" x2="580" y2="537.5" stroke="#a8a8a8" stroke-width="3"/>
<text x="545" y="542" font-family='"Liberation Sans", sans-serif' font-size="13.6" fill="#c0c0c0" font-weight="normal" font-style="normal" text-anchor="start" textLength="27" lengthAdjust="spacing" stroke="#c0c0c0" stroke-width="0.6">5.0V</text>
<line x1="571" y1="554.5" x2="580" y2="554.5" stroke="#a8a8a8" stroke-width="3"/>
<text x="545" y="559" font-family='"Liberation Sans", sans-serif' font-size="13.6" fill="#c0c0c0" font-weight="normal" font-style="normal" text-anchor="start" textLength="27" lengthAdjust="spacing" stroke="#c0c0c0" stroke-width="0.6">4.5V</text>
<line x1="571" y1="572.5" x2="580" y2="572.5" stroke="#a8a8a8" stroke-width="3"/>
<text x="545" y="577" font-family='"Liberation Sans", sans-serif' font-size="13.6" fill="#c0c0c0" font-weight="normal" font-style="normal" text-anchor="start" textLength="27" lengthAdjust="spacing" stroke="#c0c0c0" stroke-width="0.6">4.0V</text>
<line x1="571" y1="589.5" x2="580" y2="589.5" stroke="#a8a8a8" stroke-width="3"/>
<text x="545" y="594" font-family='"Liberation Sans", sans-serif' font-size="13.6" fill="#c0c0c0" font-weight="normal" font-style="normal" text-anchor="start" textLength="27" lengthAdjust="spacing" stroke="#c0c0c0" stroke-width="0.6">3.5V</text>
<line x1="571" y1="606.5" x2="580" y2="606.5" stroke="#a8a8a8" stroke-width="3"/>
<text x="545" y="611" font-family='"Liberation Sans", sans-serif' font-size="13.6" fill="#c0c0c0" font-weight="normal" font-style="normal" text-anchor="start" textLength="27" lengthAdjust="spacing" stroke="#c0c0c0" stroke-width="0.6">3.0V</text>
<line x1="571" y1="624.5" x2="580" y2="624.5" stroke="#a8a8a8" stroke-width="3"/>
<text x="545" y="629" font-family='"Liberation Sans", sans-serif' font-size="13.6" fill="#c0c0c0" font-weight="normal" font-style="normal" text-anchor="start" textLength="27" lengthAdjust="spacing" stroke="#c0c0c0" stroke-width="0.6">2.5V</text>
<line x1="571" y1="641.5" x2="580" y2="641.5" stroke="#a8a8a8" stroke-width="3"/>
<text x="545" y="646" font-family='"Liberation Sans", sans-serif' font-size="13.6" fill="#c0c0c0" font-weight="normal" font-style="normal" text-anchor="start" textLength="27" lengthAdjust="spacing" stroke="#c0c0c0" stroke-width="0.6">2.0V</text>
<line x1="571" y1="658.5" x2="580" y2="658.5" stroke="#a8a8a8" stroke-width="3"/>
<text x="545" y="663" font-family='"Liberation Sans", sans-serif' font-size="13.6" fill="#c0c0c0" font-weight="normal" font-style="normal" text-anchor="start" textLength="27" lengthAdjust="spacing" stroke="#c0c0c0" stroke-width="0.6">1.5V</text>
<line x1="571" y1="675.5" x2="580" y2="675.5" stroke="#a8a8a8" stroke-width="3"/>
<text x="545" y="680" font-family='"Liberation Sans", sans-serif' font-size="13.6" fill="#c0c0c0" font-weight="normal" font-style="normal" text-anchor="start" textLength="27" lengthAdjust="spacing" stroke="#c0c0c0" stroke-width="0.6">1.0V</text>
<line x1="571" y1="693.5" x2="580" y2="693.5" stroke="#a8a8a8" stroke-width="3"/>
<text x="545" y="698" font-family='"Liberation Sans", sans-serif' font-size="13.6" fill="#c0c0c0" font-weight="normal" font-style="normal" text-anchor="start" textLength="27" lengthAdjust="spacing" stroke="#c0c0c0" stroke-width="0.6">0.5V</text>
<line x1="571" y1="710.5" x2="580" y2="710.5" stroke="#a8a8a8" stroke-width="3"/>
<text x="545" y="715" font-family='"Liberation Sans", sans-serif' font-size="13.6" fill="#c0c0c0" font-weight="normal" font-style="normal" text-anchor="start" textLength="27" lengthAdjust="spacing" stroke="#c0c0c0" stroke-width="0.6">0.0V</text>
<text x="803" y="532" font-family='"Liberation Sans", sans-serif' font-size="13.6" fill="#e41212" font-weight="normal" font-style="normal" text-anchor="middle" textLength="47.5" lengthAdjust="spacing" stroke="#e41212" stroke-width="0.55">V(sda2)</text>
<polyline points="580.5,539.5 580.5,539.5 580.5,710.5 625.5,710.5 625.5,539.5 669.5,539.5 669.5,710.5 714.5,710.5 714.5,539.5 848.5,539.5 848.5,710.5 892.5,710.5 892.5,539.5 937.5,539.5 937.5,710.5 981.5,710.5 981.5,539.5 1026.5,539.5 1026.5,539.5" fill="none" stroke="#e41212" stroke-width="3" stroke-linejoin="miter" stroke-linecap="square"/>
<line x1="580.5" y1="710" x2="580.5" y2="718" stroke="#a8a8a8" stroke-width="3"/>
<text x="580.5" y="731" font-family='"Liberation Sans", sans-serif' font-size="13.6" fill="#c0c0c0" font-weight="normal" font-style="normal" text-anchor="middle" textLength="26" lengthAdjust="spacing" stroke="#c0c0c0" stroke-width="0.6">0ms</text>
<line x1="669.5" y1="710" x2="669.5" y2="718" stroke="#a8a8a8" stroke-width="3"/>
<text x="669.5" y="731" font-family='"Liberation Sans", sans-serif' font-size="13.6" fill="#c0c0c0" font-weight="normal" font-style="normal" text-anchor="middle" textLength="42" lengthAdjust="spacing" stroke="#c0c0c0" stroke-width="0.6">100ms</text>
<line x1="758.5" y1="710" x2="758.5" y2="718" stroke="#a8a8a8" stroke-width="3"/>
<text x="758.5" y="731" font-family='"Liberation Sans", sans-serif' font-size="13.6" fill="#c0c0c0" font-weight="normal" font-style="normal" text-anchor="middle" textLength="42" lengthAdjust="spacing" stroke="#c0c0c0" stroke-width="0.6">200ms</text>
<line x1="848.5" y1="710" x2="848.5" y2="718" stroke="#a8a8a8" stroke-width="3"/>
<text x="848.5" y="731" font-family='"Liberation Sans", sans-serif' font-size="13.6" fill="#c0c0c0" font-weight="normal" font-style="normal" text-anchor="middle" textLength="42" lengthAdjust="spacing" stroke="#c0c0c0" stroke-width="0.6">300ms</text>
<line x1="937.5" y1="710" x2="937.5" y2="718" stroke="#a8a8a8" stroke-width="3"/>
<text x="937.5" y="731" font-family='"Liberation Sans", sans-serif' font-size="13.6" fill="#c0c0c0" font-weight="normal" font-style="normal" text-anchor="middle" textLength="42" lengthAdjust="spacing" stroke="#c0c0c0" stroke-width="0.6">400ms</text>
<line x1="1026.5" y1="710" x2="1026.5" y2="718" stroke="#a8a8a8" stroke-width="3"/>
<text x="1026.5" y="731" font-family='"Liberation Sans", sans-serif' font-size="13.6" fill="#c0c0c0" font-weight="normal" font-style="normal" text-anchor="middle" textLength="42" lengthAdjust="spacing" stroke="#c0c0c0" stroke-width="0.6">500ms</text>
<path d="M25.5 56.5H35.5L38.5 59.5V70.5H25.5Z" stroke="#000" fill="#fff" stroke-width="1" />
<path d="M35.5 56.5V59.5H38.5" stroke="#000" fill="none" stroke-width="1" />
<path d="M26.5 67.5 L30 62 H32.8 L29.3 67.5 Z" stroke="none" fill="#dc1020" stroke-width="1" />
<path d="M30.5 65.5 H33 L32.2 67 H29.6 Z" stroke="none" fill="#dc1020" stroke-width="1" />
<path d="M32.5 67.5 L36 62.2 H34 L34.8 61 H38.6 L37.8 62.2 H37.2 L33.8 67.5 Z" stroke="none" fill="#dc1020" stroke-width="1" />
<path d="M48.5 68.5V59.5H51.5L52.5 60.5H58.5V63" stroke="#000" fill="#ffff99" stroke-width="1" />
<path d="M48.5 68.5L52.5 63.5H63.5L59.5 68.5Z" stroke="#000" fill="#808000" stroke-width="1" />
<path d="M48.5 59.5H52.5V60.5H58.5V63.5H52.5L48.5 68.5Z" stroke="#000" fill="#ffff99" stroke-width="1" />
<path d="M56 59 Q58.5 55.2 61.8 57.8" stroke="#000" fill="none" stroke-width="1.2" />
<path d="M60.3 58.8 L63.5 59.8 L63 56.2 Z" stroke="none" fill="#000" stroke-width="1" />
<path d="M79.5 56.5H92.5V69.5H79.5Z" stroke="#000" fill="#808000" stroke-width="1" />
<rect x="82" y="57" width="8" height="6" fill="#fff" />
<rect x="81.5" y="56.5" width="9" height="6" fill="#fff" stroke="#000"/>
<rect x="82" y="65" width="9" height="5" fill="#000" />
<rect x="87" y="66" width="2" height="3" fill="#fff" />
<rect x="91" y="57" width="1" height="1" fill="#fff" />
<path d="M109.5 57.5 H111.5 L112.5 58.5 H113.5 L114.5 56.5 H120 L122 58 L124.5 60.5 V63.8 L123 62 H120 L118.5 62.5 H114.5 L113 61.5 H112 L111.5 62.5 H109.5 Z" stroke="#000" fill="#f4f4fa" stroke-width="1.2" />
<rect x="116" y="63" width="3" height="5" fill="#0000c8" />
<rect x="115" y="67" width="5" height="4" fill="#0000c8" />
<rect x="150.5" y="56.5" width="3" height="2" fill="#fff" stroke="#000" stroke-width="1.2"/>
<path d="M151 58.5 L146.3 64.5" stroke="#000" fill="none" stroke-width="2.2" />
<path d="M147.5 59.8 H145 V61.5" stroke="#000" fill="none" stroke-width="1.3" />
<path d="M150.5 61.8 H154 V60.8" stroke="#000" fill="none" stroke-width="1.3" />
<path d="M146.3 64.5 L141 66.3 V68.5" stroke="#000" fill="none" stroke-width="1.5" />
<path d="M147 64.8 L149.6 67 L148.6 70.5" stroke="#000" fill="none" stroke-width="1.5" />
<path d="M140 58 L143 59.5 M142 56.5 L144.5 58" stroke="#a0a0a0" fill="none" stroke-width="1" />
<path d="M164.5 63.5 Q165.5 62 167.5 64.5 V59 Q168.5 57.5 169.5 59 V63 V57.5 Q170.8 55.8 172 57.5 V63 V58 Q173.3 56.5 174.5 58 V63.5 V60 Q175.7 58.6 176.8 60 V67 L175.5 70.5 H169.5 Z" stroke="#a8a8a8" fill="#f4f4f4" stroke-width="1" />
<circle cx="200.5" cy="61.5" r="4.8" fill="#e4f6f6" stroke="#000" stroke-width="1.6"/>
<path d="M204.0 65.0 L209.0 70.0" stroke="#000" stroke-width="2.4" stroke-linecap="round"/>
<path d="M197.5 61.5h6M200.5 58.5v6" stroke="#000" stroke-width="1.3"/>
<circle cx="223.5" cy="61.5" r="4.8" fill="#f0f0f0" stroke="#a8a8a8" stroke-width="1.6"/>
<path d="M227.0 65.0 L232.0 70.0" stroke="#a8a8a8" stroke-width="2.4" stroke-linecap="round"/>
<circle cx="246.5" cy="61.5" r="4.8" fill="#e4f6f6" stroke="#000" stroke-width="1.6"/>
<path d="M250.0 65.0 L255.0 70.0" stroke="#000" stroke-width="2.4" stroke-linecap="round"/>
<path d="M243.5 61.5h6" stroke="#000" stroke-width="1.3"/>
<circle cx="269.5" cy="61.5" r="4.8" fill="#e4f6f6" stroke="#000" stroke-width="1.6"/>
<path d="M273.0 65.0 L278.0 70.0" stroke="#000" stroke-width="2.4" stroke-linecap="round"/>
<path d="M264.0 56.0 L274.5 67.5 M275.5 56.5 L263.5 66.5" stroke="#e00000" stroke-width="1.5"/>
<path d="M295.5 56V69.5H310" stroke="#000" fill="none" stroke-width="1.5" />
<path d="M294 58.5h1.5M294 61.5h1.5M294 64.5h1.5M294 67.5h1.5M297.5 69.5v1.5M300.5 69.5v1.5M303.5 69.5v1.5M306.5 69.5v1.5M309.5 69.5v1.5" stroke="#000" fill="none" stroke-width="1" />
<path d="M297 59.5 L299.5 57 L302 59.5 L304.5 57 L307 59.5 L309.5 57" stroke="#000" fill="none" stroke-width="1" />
<path d="M297 62.5 H299 L300.5 61.5 H302 L303.5 62.5 H305 L306.5 63.5 H309" stroke="#d01020" fill="none" stroke-width="1" />
<path d="M297 65.5 H300 L301 64.5 H303 L304 65.5 H309" stroke="#000080" fill="none" stroke-width="1.2" />
<path d="M318.5 56V69.5H333" stroke="#b0b0b0" fill="none" stroke-width="1.5" />
<path d="M327 57.5 Q321 59 321 63 Q321 67 327 68.5 M330.5 57 V69 M329 59 l1.5 -2 l1.5 2 M329 67 l1.5 2 l1.5 -2" stroke="#b0b0b0" fill="none" stroke-width="1" />
<rect x="348.5" y="56.5" width="15" height="7" fill="#fff" stroke="#000080"/>
<rect x="348" y="56" width="16" height="3" fill="#000080" />
<rect x="349" y="57" width="1" height="1" fill="#fff" />
<rect x="348.5" y="63.5" width="15" height="7" fill="#fff" stroke="#000080"/>
<rect x="348" y="63" width="16" height="3" fill="#000080" />
<rect x="349" y="64" width="1" height="1" fill="#fff" />
<rect x="361" y="57" width="1" height="1" fill="#fff" />
<rect x="361" y="64" width="1" height="1" fill="#fff" />
<rect x="371.5" y="56.5" width="9" height="6" fill="#fff" stroke="#000080"/>
<rect x="371" y="56" width="10" height="3" fill="#000080" />
<rect x="372" y="57" width="1" height="1" fill="#fff" />
<rect x="374.5" y="60.5" width="9" height="6" fill="#fff" stroke="#000080"/>
<rect x="374" y="60" width="10" height="3" fill="#000080" />
<rect x="375" y="61" width="1" height="1" fill="#fff" />
<rect x="377.5" y="64.5" width="9" height="6" fill="#fff" stroke="#000080"/>
<rect x="377" y="64" width="10" height="3" fill="#000080" />
<rect x="378" y="65" width="1" height="1" fill="#fff" />
<rect x="394.5" y="56.5" width="9" height="6" fill="#fff" stroke="#000080"/>
<rect x="394" y="56" width="10" height="3" fill="#000080" />
<rect x="395" y="57" width="1" height="1" fill="#fff" />
<rect x="397.5" y="60.5" width="9" height="6" fill="#fff" stroke="#000080"/>
<rect x="397" y="60" width="10" height="3" fill="#000080" />
<rect x="398" y="61" width="1" height="1" fill="#fff" />
<rect x="400.5" y="64.5" width="9" height="6" fill="#fff" stroke="#000080"/>
<rect x="400" y="64" width="10" height="3" fill="#000080" />
<rect x="401" y="65" width="1" height="1" fill="#fff" />
<path d="M406.5 56.5 L410.5 60.5" stroke="#000" fill="none" stroke-width="1.3" />
<path d="M406 56 H409.5 M406.5 56 V59.5" stroke="#000" fill="none" stroke-width="1.3" />
<path d="M430 56 L434 65 M436.5 56 L432.5 65" stroke="#000080" fill="none" stroke-width="1.2" />
<circle cx="430.5" cy="67" r="2" fill="none" stroke="#000080" stroke-width="1.2"/>
<circle cx="436" cy="67" r="2" fill="none" stroke="#000080" stroke-width="1.2"/>
<path d="M449.5 56.5H455.5L457.5 58.5V66.5H449.5Z" stroke="#000" fill="#fff" stroke-width="1" />
<path d="M451 59.5h4 M451 61.5h4 M451 63.5h4" stroke="#000" fill="none" stroke-width="1" />
<path d="M455.5 60.5H461.5L463.5 62.5V69.5H455.5Z" stroke="#000080" fill="#fff" stroke-width="1" />
<path d="M457 63.5h5 M457 65.5h5 M457 67.5h5" stroke="#000080" fill="none" stroke-width="1" />
<rect x="472" y="57" width="11" height="12" rx="2" fill="#a8a8a8"/>
<rect x="475" y="56" width="5" height="2" fill="#a8a8a8" />
<rect x="478.5" y="62.5" width="8" height="7" fill="#e8e8e8" stroke="#a8a8a8"/>
<path d="M497 57h4v3h-4z M504 57h4v3h-4z" stroke="none" fill="#000" stroke-width="1" />
<path d="M495.5 70.5 V64 L497 60 H501.5 V63 H503.5 V60 H508 L509.5 64 V70.5 H504 V66 H501 V70.5 Z" stroke="none" fill="#000" stroke-width="1" />
<rect x="497" y="64" width="1" height="3" fill="#fff" />
<rect x="506" y="64" width="1" height="3" fill="#fff" />
<path d="M528.5 60.5 V57.5 H535.5 L537.5 59.5 V60.5" stroke="#000" fill="#fff" stroke-width="1" />
<path d="M526.5 69.5 V62.5 L528.5 60.5 H539.5 L540.5 62.5 V69.5 Z" stroke="#000" fill="#d8d8d8" stroke-width="1" />
<path d="M528 69.5 H540.5" stroke="#000" fill="none" stroke-width="2" />
<path d="M550.5 62 L552.5 56.5 H562.5 L560.5 62" stroke="#000" fill="#fff" stroke-width="1" />
<path d="M553 58.5h7 M552.5 60.5h7" stroke="#000" fill="none" stroke-width="1" />
<path d="M548.5 69.5 V63.5 L550 61.5 H562 L563.5 63.5 V69.5 Z" stroke="#000" fill="#fff" stroke-width="1" />
<rect x="550" y="65" width="12" height="2" fill="#e8e8c0" />
<path d="M548.5 64.5 H563.5 M548.5 67.5 H563.5" stroke="#000" fill="none" stroke-width="1" />
<path d="M582 68 L588.5 57.5 L590.5 58.5 L584 69 L581.5 69.5 Z" stroke="#000" fill="#f0e030" stroke-width="1" />
<path d="M581 69.5 H595" stroke="#000080" fill="none" stroke-width="1.2" />
<path d="M609.5 56 V63.5" stroke="#000" fill="none" stroke-width="1" />
<path d="M602.5 63.5 H616.5 L609.5 70.5 Z" stroke="#000" fill="#f2eec0" stroke-width="1" />
<rect x="625.5" y="57.5" width="14" height="9" rx="2" fill="#f2eec0" stroke="#000"/>
<path d="M632.5 66.5 V71" stroke="#000" fill="none" stroke-width="1" />
<text x="632.5" y="65" font-family='"Liberation Mono", monospace' font-size="8.5" fill="#000" font-weight="bold" font-style="normal" text-anchor="middle" >A</text>
<path d="M657.5 56 L660.5 59.5 L652 64 L660 68 L656.5 70.8" stroke="#000" fill="none" stroke-width="1.1" />
<path d="M678.5 56 V62 M678.5 65.5 V71 M673 62.5 H684 M673 65.5 H684" stroke="#000" fill="none" stroke-width="1.3" />
<path d="M699 56.5 Q704.5 57.5 703.5 61 Q702.5 63 699.5 63.3 Q704.5 64 703.5 68 Q702 70.5 699 70.5" stroke="#000" fill="none" stroke-width="1.2" />
<path d="M718.5 59.5 H732.5 L725.5 66.5 Z" stroke="#000" fill="#d8d8d8" stroke-width="1" />
<path d="M725.5 56 V71 M718 66.5 H733" stroke="#000" fill="none" stroke-width="1.1" />
<path d="M743.5 58.5 H748 Q752.5 58.5 752.5 63.5 Q752.5 68.5 748 68.5 H743.5 Z" stroke="#000" fill="#e0e0e0" stroke-width="1.3" />
<path d="M740 60.5 H743.5 M740 66.5 H743.5 M752.5 63.5 H756" stroke="#000" fill="none" stroke-width="1.2" />
<path d="M764 66 L766 64.5 L768 66.5 L767 58 L769.5 57 L772 62.5 L773 56.5 L775.5 57 L776.5 63 L778.5 60.5 L778.5 66 L775 70.5 H770 Z" stroke="#000" fill="#fff" stroke-width="1.2" />
<path d="M788 63 L790 61.5 L791 63 V59 L793 58 L794 61 L795 58 L797.5 58.5 L799.5 61 V64.5 L797.5 67 V69.5 H791.5 V67 Z" stroke="#000" fill="#fff" stroke-width="1.2" />
<path d="M812 62 A5.5 5.5 0 1 1 815.5 68.5" stroke="#a8a8a8" fill="none" stroke-width="1.3" />
<path d="M810 59.5 L810.5 65 L815 62.5 Z" stroke="none" fill="#a8a8a8" stroke-width="1" />
<path d="M845 62 A5.5 5.5 0 1 0 841.5 68.5" stroke="#a8a8a8" fill="none" stroke-width="1.3" />
<path d="M847 59.5 L846.5 65 L842 62.5 Z" stroke="none" fill="#a8a8a8" stroke-width="1" />
<path d="M860 62.5 H855.8 V70 H860 M855.8 66.2 H859" stroke="#a8a8a8" fill="none" stroke-width="1.6" />
<path d="M862.5 68.5 V64.5 H871 V68.5 M866.5 64.5 V68" stroke="#a8a8a8" fill="none" stroke-width="1.5" />
<path d="M857 61 Q862 55 869 58.5" stroke="#a8a8a8" fill="none" stroke-width="1" />
<path d="M867 56.5 L870.5 59.5 L866.5 60 Z" stroke="none" fill="#a8a8a8" stroke-width="1" />
<path d="M883 62.5 H878.8 V70 H883 M878.8 66.2 H882" stroke="#a8a8a8" fill="none" stroke-width="1.6" />
<path d="M889 62.5 H893.2 V70 H889 M893.2 66.2 H890" stroke="#a8a8a8" fill="none" stroke-width="1.6" />
<path d="M881 61 Q886 55 892 58.5" stroke="#a8a8a8" fill="none" stroke-width="1" />
<path d="M890 56.5 L893.5 59.5 L889.5 60 Z" stroke="none" fill="#a8a8a8" stroke-width="1" />
<text x="901" y="68.7" font-family='"Liberation Serif", serif' font-size="13" fill="#000" font-weight="bold" font-style="italic" text-anchor="start" textLength="15" lengthAdjust="spacingAndGlyphs" >Aa</text>
<rect x="925" y="63" width="2" height="2" fill="#000" />
<text x="928.3" y="68.5" font-family='"Liberation Sans", sans-serif' font-size="13" fill="#000" font-weight="normal" font-style="normal" text-anchor="start" textLength="10" lengthAdjust="spacingAndGlyphs" stroke="#000" stroke-width="0.35">op</text>
<path d="M20 89.5 H23" stroke="#0000c0" fill="none" stroke-width="1" />
<rect x="23" y="85" width="2" height="8" fill="#0000c0" />
<path d="M25 86 L29.5 82" stroke="#0000c0" fill="none" stroke-width="1" />
<path d="M25 91.5 L30.5 97" stroke="#0000c0" fill="none" stroke-width="1.2" />
<path d="M26.5 95 L29.5 95.5 L28.5 92.5 Z" stroke="none" fill="#0000c0" stroke-width="1" />
<path d="M22 123.5 H25" stroke="#0000c0" fill="none" stroke-width="1" />
<rect x="25" y="119" width="2" height="8" fill="#0000c0" />
<path d="M27 120 L31.5 116" stroke="#0000c0" fill="none" stroke-width="1" />
<path d="M27 125.5 L32.5 131" stroke="#0000c0" fill="none" stroke-width="1.2" />
<path d="M28.5 129 L31.5 129.5 L30.5 126.5 Z" stroke="none" fill="#0000c0" stroke-width="1" />
<rect x="89" y="84" width="13" height="12" fill="#cfcfcf" />
<path d="M88.5 84 V97.5 H102" stroke="#000" fill="none" stroke-width="1.5" />
<path d="M86 85.5 h2.5" stroke="#000" fill="none" stroke-width="1" />
<path d="M86 88.5 h2.5" stroke="#000" fill="none" stroke-width="1" />
<path d="M86 91.5 h2.5" stroke="#000" fill="none" stroke-width="1" />
<path d="M86 94.5 h2.5" stroke="#000" fill="none" stroke-width="1" />
<path d="M88.5 97.5 v2" stroke="#000" fill="none" stroke-width="1" />
<path d="M91.5 97.5 v2" stroke="#000" fill="none" stroke-width="1" />
<path d="M94.5 97.5 v2" stroke="#000" fill="none" stroke-width="1" />
<path d="M97.5 97.5 v2" stroke="#000" fill="none" stroke-width="1" />
<path d="M100.5 97.5 v2" stroke="#000" fill="none" stroke-width="1" />
<path d="M89 92.5 L92.5 88.5 L95 88.5 L97 91 L98.5 91 L101.5 87.5" stroke="#e00010" fill="none" stroke-width="1.6" />
<rect x="547" y="116" width="13" height="12" fill="#cfcfcf" />
<path d="M546.5 116 V129.5 H560" stroke="#000" fill="none" stroke-width="1.5" />
<path d="M544 117.5 h2.5" stroke="#000" fill="none" stroke-width="1" />
<path d="M544 120.5 h2.5" stroke="#000" fill="none" stroke-width="1" />
<path d="M544 123.5 h2.5" stroke="#000" fill="none" stroke-width="1" />
<path d="M544 126.5 h2.5" stroke="#000" fill="none" stroke-width="1" />
<path d="M546.5 129.5 v2" stroke="#000" fill="none" stroke-width="1" />
<path d="M549.5 129.5 v2" stroke="#000" fill="none" stroke-width="1" />
<path d="M552.5 129.5 v2" stroke="#000" fill="none" stroke-width="1" />
<path d="M555.5 129.5 v2" stroke="#000" fill="none" stroke-width="1" />
<path d="M558.5 129.5 v2" stroke="#000" fill="none" stroke-width="1" />
<path d="M547 124.5 L550.5 120.5 L553 120.5 L555 123 L556.5 123 L559.5 119.5" stroke="#e00010" fill="none" stroke-width="1.6" />
</svg>
</body></html>
